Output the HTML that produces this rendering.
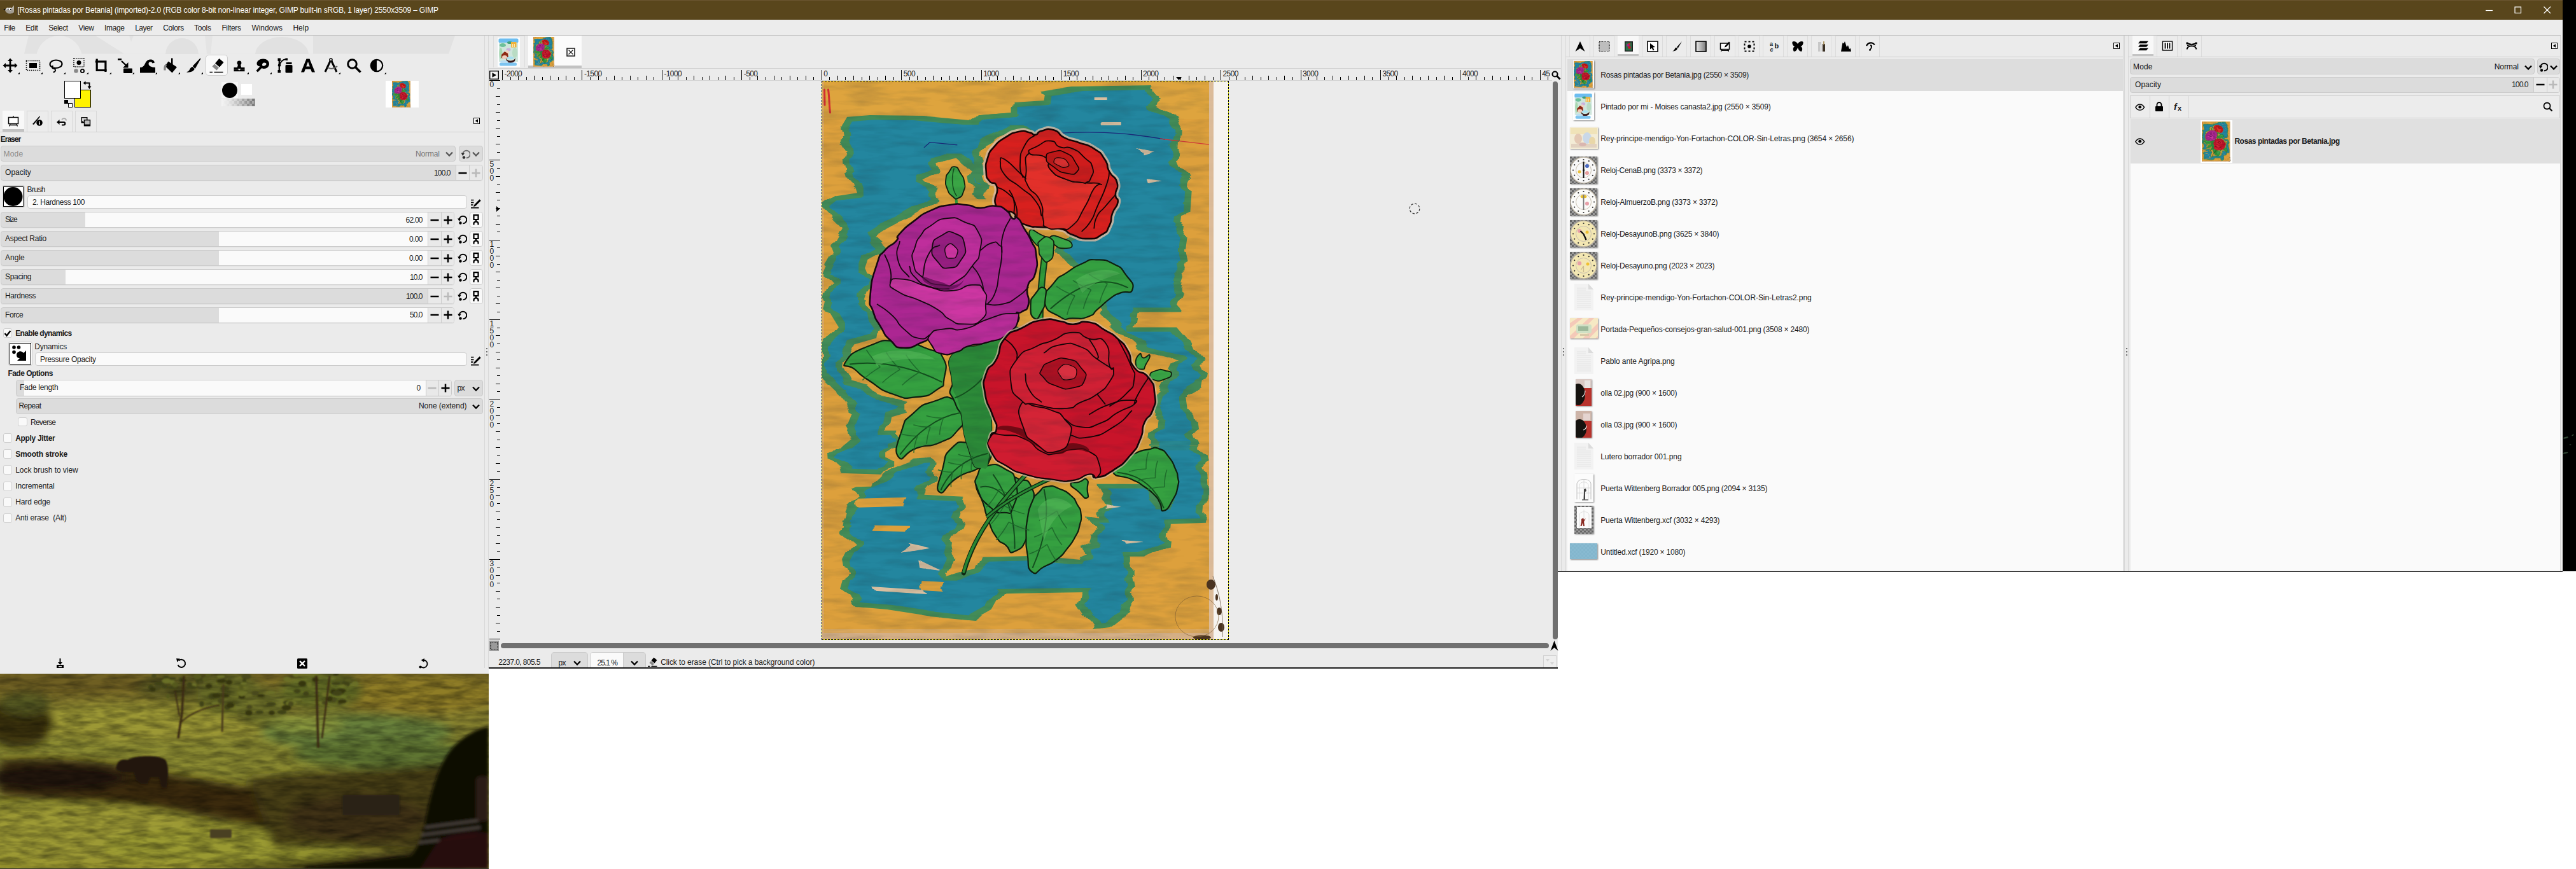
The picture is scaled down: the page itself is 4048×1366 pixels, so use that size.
<!DOCTYPE html><html><head><meta charset="utf-8"><title>GIMP</title><style>html,body{margin:0;padding:0;background:#fff}body{width:4048px;height:1366px;position:relative;overflow:hidden;font-family:"Liberation Sans", sans-serif;font-size:12px}svg{display:block;overflow:hidden}</style></head><body><svg width="0" height="0" style="position:absolute"><defs><filter id="pjag" x="-5%" y="-5%" width="110%" height="110%" color-interpolation-filters="sRGB"><feTurbulence type="fractalNoise" baseFrequency="0.004 0.055" numOctaves="1" seed="5" result="n0"/><feColorMatrix in="n0" type="matrix" values="3.2 0 0 0 -1.1  0 0 0 0 0.5  0 0 0 0 0.5  0 0 0 0 1" result="n1"/><feComponentTransfer in="n1" result="n"><feFuncR type="discrete" tableValues="0 0.15 0.3 0.42 0.5 0.58 0.7 0.85 1"/></feComponentTransfer><feDisplacementMap in="SourceGraphic" in2="n" scale="13" xChannelSelector="R" yChannelSelector="G"/></filter><filter id="perode" x="-5%" y="-5%" width="110%" height="110%" color-interpolation-filters="sRGB"><feMorphology operator="erode" radius="10 7" result="e"/><feTurbulence type="fractalNoise" baseFrequency="0.004 0.055" numOctaves="1" seed="5" result="n0"/><feColorMatrix in="n0" type="matrix" values="3.2 0 0 0 -1.1  0 0 0 0 0.5  0 0 0 0 0.5  0 0 0 0 1" result="n1"/><feComponentTransfer in="n1" result="n"><feFuncR type="discrete" tableValues="0 0.15 0.3 0.42 0.5 0.58 0.7 0.85 1"/></feComponentTransfer><feDisplacementMap in="e" in2="n" scale="13" xChannelSelector="R" yChannelSelector="G"/></filter><filter id="ptex" x="0" y="0" width="100%" height="100%"><feTurbulence type="fractalNoise" baseFrequency="0.018 0.085" numOctaves="3" seed="11" result="n"/><feColorMatrix in="n" type="matrix" values="0 0 0 0 0  0 0 0 0 0  0 0 0 0 0  1.5 0 0 0 -0.6" result="a"/><feComposite in="SourceGraphic" in2="a" operator="in"/></filter><symbol id="rosas" viewBox="1291 127 639 878" preserveAspectRatio="none"><rect x="1291" y="127" width="639" height="878" fill="#dda03c"/><rect x="1291" y="127" width="639" height="60" fill="#e0a640" opacity=".6"/><rect x="1291" y="994" width="620" height="11" fill="#d3b08e" opacity=".9"/><rect x="1291" y="988" width="620" height="6" fill="#d6b491" opacity=".4"/><rect x="1291" y="127" width="4" height="878" fill="#d8b08a" opacity=".45"/><g fill="#438c58" filter="url(#pjag)"><polygon points="1328,184 1366,181 1452,182 1527,189 1537,181 1587,177 1600,200 1566,217 1542,230 1537,244 1553,286 1546,313 1532,313 1525,270 1501,248 1473,256 1477,272 1456,282 1472,296 1468,320 1432,341 1394,358 1373,372 1397,393 1366,410 1373,400 1366,421 1373,438 1363,469 1368,497 1380,514 1377,531 1342,541 1332,562 1330,576 1339,597 1366,604 1384,621 1418,631 1418,648 1394,655 1390,676 1411,676 1411,700 1398,704 1398,732 1387,745 1326,743 1308,727 1307,711 1318,700 1335,686 1325,666 1335,642 1321,621 1292,593 1292,538 1311,514 1294,486 1304,445 1294,434 1301,417 1311,400 1306,386 1321,358 1304,341 1296,320 1311,308 1344,303 1337,282 1332,265 1330,241 1321,224 1318,201"/><polygon points="1344,768 1380,753 1401,734 1437,720 1469,718 1466,757 1451,777 1512,780 1516,807 1508,828 1494,857 1498,878 1491,905 1530,893 1537,875 1620,873 1702,880 1702,930 1576,932 1562,957 1530,975 1458,968 1387,957 1341,953 1326,928 1334,900 1330,878 1341,857 1319,836 1326,804 1348,782"/><polygon points="1600,882 1621,905 1671,900 1696,886 1689,875 1704,871 1700,857 1718,853 1721,843 1711,811 1732,814 1725,800 1736,793 1721,766 1722,760 1808,760 1818,778 1830,792 1836,793 1826,736 1812,700 1886,700 1896,740 1898,771 1894,821 1836,823 1832,860 1800,874 1775,874 1775,903 1778,921 1778,950 1768,968 1746,985 1721,988 1696,950 1700,930 1671,925 1621,925 1600,914"/><polygon points="1587,177 1587,161 1633,158 1635,144 1690,136 1811,134 1818,165 1842,180 1854,199 1852,248 1866,282 1862,341 1855,393 1864,435 1849,479 1856,490 1790,490 1786,514 1855,514 1873,535 1897,586 1893,607 1869,621 1876,673 1886,700 1808,700 1815,642 1824,614 1848,566 1793,552 1766,528 1728,493 1728,470 1700,440 1662,396 1690,350 1700,300 1690,250 1650,228 1610,216 1592,203 1566,217 1563,208 1537,205 1527,189 1537,181"/></g><g fill="#23869f" filter="url(#perode)"><polygon points="1328,184 1366,181 1452,182 1527,189 1537,181 1587,177 1600,200 1566,217 1542,230 1537,244 1553,286 1546,313 1532,313 1525,270 1501,248 1473,256 1477,272 1456,282 1472,296 1468,320 1432,341 1394,358 1373,372 1397,393 1366,410 1373,400 1366,421 1373,438 1363,469 1368,497 1380,514 1377,531 1342,541 1332,562 1330,576 1339,597 1366,604 1384,621 1418,631 1418,648 1394,655 1390,676 1411,676 1411,700 1398,704 1398,732 1387,745 1326,743 1308,727 1307,711 1318,700 1335,686 1325,666 1335,642 1321,621 1292,593 1292,538 1311,514 1294,486 1304,445 1294,434 1301,417 1311,400 1306,386 1321,358 1304,341 1296,320 1311,308 1344,303 1337,282 1332,265 1330,241 1321,224 1318,201"/><polygon points="1344,768 1380,753 1401,734 1437,720 1469,718 1466,757 1451,777 1512,780 1516,807 1508,828 1494,857 1498,878 1491,905 1530,893 1537,875 1620,873 1702,880 1702,930 1576,932 1562,957 1530,975 1458,968 1387,957 1341,953 1326,928 1334,900 1330,878 1341,857 1319,836 1326,804 1348,782"/><polygon points="1600,882 1621,905 1671,900 1696,886 1689,875 1704,871 1700,857 1718,853 1721,843 1711,811 1732,814 1725,800 1736,793 1721,766 1722,760 1808,760 1818,778 1830,792 1836,793 1826,736 1812,700 1886,700 1896,740 1898,771 1894,821 1836,823 1832,860 1800,874 1775,874 1775,903 1778,921 1778,950 1768,968 1746,985 1721,988 1696,950 1700,930 1671,925 1621,925 1600,914"/><polygon points="1587,177 1587,161 1633,158 1635,144 1690,136 1811,134 1818,165 1842,180 1854,199 1852,248 1866,282 1862,341 1855,393 1864,435 1849,479 1856,490 1790,490 1786,514 1855,514 1873,535 1897,586 1893,607 1869,621 1876,673 1886,700 1808,700 1815,642 1824,614 1848,566 1793,552 1766,528 1728,493 1728,470 1700,440 1662,396 1690,350 1700,300 1690,250 1650,228 1610,216 1592,203 1566,217 1563,208 1537,205 1527,189 1537,181"/></g><g filter="url(#pjag)"><polygon points="1348,783 1425,781 1420,795 1350,797" fill="#dda03c"/><polygon points="1300,746 1382,748 1376,764 1300,766" fill="#dda03c"/><polygon points="1369,825 1425,826 1423,835 1371,834" fill="#dda03c"/><polygon points="1448,912 1482,914 1480,929 1450,927" fill="#dda03c"/><polygon points="1423,853 1460,861 1423,868" fill="#d9bfa0"/><polygon points="1448,880 1482,896 1450,892" fill="#d9bfa0"/><polygon points="1376,921 1451,926 1451,933 1380,928" fill="#d9bfa0"/><polygon points="1735,792 1760,796 1736,799" fill="#d9bfa0"/><polygon points="1767,848 1795,851 1768,854" fill="#d9bfa0"/><polygon points="1790,233 1812,238 1792,244" fill="#d9bfa0"/><polygon points="1806,281 1828,284 1808,288" fill="#d9bfa0"/><polygon points="1712,153 1732,153 1732,157 1712,157" fill="#d9bfa0"/><polygon points="1730,192 1762,192 1762,197 1730,197" fill="#d9bfa0"/></g><path d="M1451.6,232 L1461,223.6 L1504,227.7" fill="none" stroke="#1b2a7a" stroke-width="1.3"/><path d="M1668,209 C1740,205 1790,212 1830,219" fill="none" stroke="#1b2a7a" stroke-width="1.3"/><path d="M1822,218 L1899,227" fill="none" stroke="#d03838" stroke-width="1.3"/><path d="M1295.5,141 L1296,165 M1301.5,141 C1303,150 1303,165 1304.5,177" fill="none" stroke="#d43030" stroke-width="3" stroke-linecap="round"/><path d="M1646,372 C1638,420 1632,470 1634,520" fill="none" stroke="#143c18" stroke-width="11"/><path d="M1646,372 C1638,420 1632,470 1634,520" fill="none" stroke="#2f9a3a" stroke-width="7"/><path d="M1502,310 L1503,322" stroke="#2f9a3a" stroke-width="4"/><path d="M1641.0,474.0C1638.0,456.7 1643.3,460.3 1655.0,445.0C1666.7,429.7 1661.0,438.3 1676.0,428.0C1691.0,417.7 1684.7,420.7 1700.0,414.0C1715.3,407.3 1705.3,407.7 1722.0,408.0C1738.7,408.3 1734.7,407.3 1750.0,415.0C1765.3,422.7 1758.3,418.0 1768.0,431.0C1777.7,444.0 1781.7,444.3 1779.0,454.0C1776.3,463.7 1771.3,455.3 1760.0,460.0C1748.7,464.7 1756.7,459.7 1745.0,468.0C1733.3,476.3 1736.7,475.3 1725.0,485.0C1713.3,494.7 1723.3,492.0 1710.0,497.0C1696.7,502.0 1700.3,500.0 1685.0,500.0C1669.7,500.0 1678.7,505.7 1664.0,497.0C1649.3,488.3 1644.0,491.3 1641.0,474.0Z" fill="#35a040" stroke="#10200f" stroke-width="2.2"/><path d="M1329.0,568.0C1336.7,555.7 1338.3,553.7 1366.0,543.0C1393.7,532.3 1381.3,534.3 1412.0,536.0C1442.7,537.7 1435.0,539.7 1458.0,548.0C1481.0,556.3 1472.5,545.7 1481.0,561.0C1489.5,576.3 1486.4,577.0 1483.4,594.0C1480.4,611.0 1486.6,602.1 1472.0,612.0C1457.4,621.9 1462.7,621.3 1439.7,623.6C1416.7,625.9 1427.6,627.5 1403.0,619.0C1378.4,610.5 1386.0,611.0 1366.0,598.0C1346.0,585.0 1355.3,590.0 1343.0,580.0C1330.7,570.0 1321.3,580.3 1329.0,568.0Z" fill="#35a040" stroke="#10200f" stroke-width="2.2"/><path d="M1412.0,718.0C1404.3,708.8 1409.0,699.5 1416.7,676.5C1424.4,653.5 1418.2,664.3 1435.0,649.0C1451.8,633.7 1445.5,637.5 1467.0,630.5C1488.5,623.5 1484.1,620.3 1499.6,628.0C1515.1,635.7 1511.9,637.3 1513.4,653.5C1514.9,669.7 1516.3,662.7 1504.0,676.5C1491.7,690.3 1497.9,685.8 1476.5,695.0C1455.1,704.2 1461.2,696.3 1439.7,704.0C1418.2,711.7 1419.7,727.2 1412.0,718.0Z" fill="#35a040" stroke="#10200f" stroke-width="2.2"/><path d="M1476.5,773.0C1468.8,768.3 1474.8,759.0 1481.0,736.0C1487.2,713.0 1481.1,717.7 1495.0,704.0C1508.9,690.3 1504.3,695.0 1522.6,695.0C1540.9,695.0 1539.3,694.8 1550.0,704.0C1560.7,713.2 1559.5,711.9 1554.8,722.6C1550.1,733.3 1552.9,726.9 1536.0,736.0C1519.1,745.1 1523.8,737.7 1504.0,750.0C1484.2,762.3 1484.2,777.7 1476.5,773.0Z" fill="#35a040" stroke="#10200f" stroke-width="2.2"/><path d="M1533.0,761.0C1531.7,747.3 1534.0,755.3 1540.0,748.0C1546.0,740.7 1542.7,742.3 1551.0,739.0C1559.3,735.7 1554.3,735.7 1565.0,738.0C1575.7,740.3 1571.3,741.3 1583.0,746.0C1594.7,750.7 1587.7,746.0 1600.0,752.0C1612.3,758.0 1612.7,748.0 1620.0,764.0C1627.3,780.0 1623.7,774.7 1622.0,800.0C1620.3,825.3 1624.3,818.0 1615.0,840.0C1605.7,862.0 1605.7,860.7 1594.0,866.0C1582.3,871.3 1589.7,863.7 1580.0,856.0C1570.3,848.3 1574.3,856.7 1565.0,843.0C1555.7,829.3 1559.0,833.0 1552.0,815.0C1545.0,797.0 1550.3,807.0 1544.0,789.0C1537.7,771.0 1534.3,774.7 1533.0,761.0Z" fill="#35a040" stroke="#10200f" stroke-width="2.2"/><path d="M1621.0,898.0C1612.3,891.3 1617.0,888.3 1614.0,870.0C1611.0,851.7 1612.0,861.3 1612.0,843.0C1612.0,824.7 1611.0,833.0 1614.0,815.0C1617.0,797.0 1615.0,803.0 1621.0,789.0C1627.0,775.0 1623.7,781.3 1632.0,773.0C1640.3,764.7 1635.0,765.7 1646.0,764.0C1657.0,762.3 1653.0,763.3 1665.0,768.0C1677.0,772.7 1673.0,770.0 1682.0,778.0C1691.0,786.0 1686.7,782.3 1692.0,792.0C1697.3,801.7 1696.7,796.0 1698.0,807.0C1699.3,818.0 1699.0,813.0 1696.0,825.0C1693.0,837.0 1695.7,830.7 1689.0,843.0C1682.3,855.3 1685.3,850.3 1676.0,862.0C1666.7,873.7 1673.0,868.7 1661.0,878.0C1649.0,887.3 1653.3,883.3 1640.0,890.0C1626.7,896.7 1629.7,904.7 1621.0,898.0Z" fill="#35a040" stroke="#10200f" stroke-width="2.2"/><path d="M1748.0,741.0C1743.7,730.7 1752.7,732.0 1765.0,722.0C1777.3,712.0 1772.3,716.3 1785.0,711.0C1797.7,705.7 1791.0,708.0 1803.0,706.0C1815.0,704.0 1810.0,701.0 1821.0,705.0C1832.0,709.0 1827.7,707.7 1836.0,718.0C1844.3,728.3 1841.3,725.3 1846.0,736.0C1850.7,746.7 1848.7,740.7 1850.0,750.0C1851.3,759.3 1852.7,752.3 1850.0,764.0C1847.3,775.7 1849.3,772.3 1842.0,785.0C1834.7,797.7 1834.7,800.3 1828.0,802.0C1821.3,803.7 1826.7,798.0 1822.0,790.0C1817.3,782.0 1822.3,786.7 1814.0,778.0C1805.7,769.3 1809.0,772.3 1797.0,764.0C1785.0,755.7 1794.3,760.7 1778.0,753.0C1761.7,745.3 1752.3,751.3 1748.0,741.0Z" fill="#35a040" stroke="#10200f" stroke-width="2.2"/><path d="M1682.0,760.0C1682.3,755.0 1686.7,759.3 1695.0,757.0C1703.3,754.7 1702.7,749.3 1707.0,753.0C1711.3,756.7 1708.0,758.3 1708.0,768.0C1708.0,777.7 1711.7,780.7 1707.0,782.0C1702.3,783.3 1702.3,779.3 1694.0,772.0C1685.7,764.7 1681.7,765.0 1682.0,760.0Z" fill="#35a040" stroke="#10200f" stroke-width="2.2"/><path d="M1500.0,552.0C1516.3,532.0 1516.7,552.3 1545.0,540.0C1573.3,527.7 1566.7,518.3 1585.0,515.0C1603.3,511.7 1603.3,515.0 1600.0,530.0C1596.7,545.0 1589.0,536.7 1575.0,560.0C1561.0,583.3 1564.3,553.3 1558.0,600.0C1551.7,646.7 1562.0,655.0 1556.0,700.0C1550.0,745.0 1552.0,735.0 1540.0,735.0C1528.0,735.0 1530.7,731.7 1520.0,700.0C1509.3,668.3 1516.0,673.3 1508.0,640.0C1500.0,606.7 1498.7,629.3 1496.0,600.0C1493.3,570.7 1483.7,572.0 1500.0,552.0Z" fill="#35a040" stroke="#10200f" stroke-width="2.2"/><path d="M1619.0,480.0C1619.3,467.3 1619.0,471.3 1626.0,462.0C1633.0,452.7 1634.7,449.3 1640.0,452.0C1645.3,454.7 1643.3,457.3 1642.0,470.0C1640.7,482.7 1641.7,480.0 1636.0,490.0C1630.3,500.0 1630.7,503.3 1625.0,500.0C1619.3,496.7 1618.7,492.7 1619.0,480.0Z" fill="#35a040" stroke="#10200f" stroke-width="2.2"/><path d="M1495.0,607.5C1501.1,593.7 1502.7,595.2 1518.0,589.0C1533.3,582.8 1530.3,581.3 1541.0,589.0C1551.7,596.7 1548.5,592.0 1550.0,612.0C1551.5,632.0 1551.7,629.0 1545.6,649.0C1539.5,669.0 1542.5,670.5 1531.8,672.0C1521.1,673.5 1524.1,667.3 1513.4,653.5C1502.7,639.7 1505.7,645.8 1499.6,630.5C1493.5,615.2 1488.9,621.3 1495.0,607.5Z" fill="#35a040" stroke="#10200f" stroke-width="2.2"/><path d="M1536.0,745.6C1540.7,733.3 1536.0,735.0 1550.0,731.8C1564.0,728.6 1562.7,726.9 1578.0,736.0C1593.3,745.1 1591.5,739.0 1596.0,759.0C1600.5,779.0 1597.6,780.7 1591.6,796.0C1585.6,811.3 1590.2,805.0 1578.0,805.0C1565.8,805.0 1569.0,808.1 1555.0,796.0C1541.0,783.9 1542.3,785.4 1536.0,768.6C1529.7,751.8 1531.3,757.9 1536.0,745.6Z" fill="#35a040" stroke="#10200f" stroke-width="2.2"/><path d="M1500.0,552.0C1516.3,532.0 1516.7,552.3 1545.0,540.0C1573.3,527.7 1566.7,518.3 1585.0,515.0C1603.3,511.7 1603.3,515.0 1600.0,530.0C1596.7,545.0 1589.0,536.7 1575.0,560.0C1561.0,583.3 1564.3,553.3 1558.0,600.0C1551.7,646.7 1562.0,655.0 1556.0,700.0C1550.0,745.0 1552.0,735.0 1540.0,735.0C1528.0,735.0 1530.7,731.7 1520.0,700.0C1509.3,668.3 1516.0,673.3 1508.0,640.0C1500.0,606.7 1498.7,629.3 1496.0,600.0C1493.3,570.7 1483.7,572.0 1500.0,552.0Z" fill="#2c8a38" stroke="none"/><path d="M1650,485 C1690,450 1730,430 1772,452" fill="none" stroke="#14501e" stroke-width="2"/><path d="M1335,572 C1390,565 1440,580 1480,600" fill="none" stroke="#14501e" stroke-width="2"/><path d="M1414,714 C1440,680 1470,655 1510,648" fill="none" stroke="#14501e" stroke-width="2"/><path d="M1478,770 C1490,742 1515,720 1552,712" fill="none" stroke="#14501e" stroke-width="2"/><path d="M1500,625 C1515,620 1535,605 1545,592" fill="none" stroke="#14501e" stroke-width="2"/><path d="M1540,765 C1560,760 1580,775 1590,798" fill="none" stroke="#14501e" stroke-width="2"/><path d="M1560,745 C1585,780 1595,820 1594,862" fill="none" stroke="#14501e" stroke-width="2"/><path d="M1622,892 C1640,850 1650,810 1640,768" fill="none" stroke="#14501e" stroke-width="2"/><path d="M1755,742 C1790,745 1815,765 1828,798" fill="none" stroke="#14501e" stroke-width="2"/><path d="M1739.5,445.5 Q1730.6,461.6 1727.3,475.5" fill="none" stroke="#1d6a2a" stroke-width="1.600" opacity=".85"/><path d="M1739.5,445.5 Q1722.3,439.2 1710.8,430.8" fill="none" stroke="#1d6a2a" stroke-width="1.600" opacity=".85"/><path d="M1713.9,455.0 Q1705.0,471.0 1701.8,484.9" fill="none" stroke="#1d6a2a" stroke-width="1.600" opacity=".85"/><path d="M1713.9,455.0 Q1696.8,448.7 1685.2,440.3" fill="none" stroke="#1d6a2a" stroke-width="1.600" opacity=".85"/><path d="M1688.4,464.5 Q1679.5,480.5 1676.2,494.4" fill="none" stroke="#1d6a2a" stroke-width="1.600" opacity=".85"/><path d="M1688.4,464.5 Q1671.2,458.2 1659.6,449.7" fill="none" stroke="#1d6a2a" stroke-width="1.600" opacity=".85"/><path d="M1445.2,584.2 Q1428.3,594.1 1417.4,604.9" fill="none" stroke="#1d6a2a" stroke-width="1.600" opacity=".85"/><path d="M1445.2,584.2 Q1431.3,570.3 1423.4,557.2" fill="none" stroke="#1d6a2a" stroke-width="1.600" opacity=".85"/><path d="M1414.2,580.3 Q1397.3,590.3 1386.4,601.0" fill="none" stroke="#1d6a2a" stroke-width="1.600" opacity=".85"/><path d="M1414.2,580.3 Q1400.3,566.4 1392.3,553.3" fill="none" stroke="#1d6a2a" stroke-width="1.600" opacity=".85"/><path d="M1383.1,576.4 Q1366.2,586.4 1355.3,597.1" fill="none" stroke="#1d6a2a" stroke-width="1.600" opacity=".85"/><path d="M1383.1,576.4 Q1369.2,562.5 1361.3,549.4" fill="none" stroke="#1d6a2a" stroke-width="1.600" opacity=".85"/><path d="M1482.0,656.7 Q1476.6,671.5 1476.2,682.9" fill="none" stroke="#1d6a2a" stroke-width="1.600" opacity=".85"/><path d="M1482.0,656.7 Q1466.2,656.5 1455.4,653.0" fill="none" stroke="#1d6a2a" stroke-width="1.600" opacity=".85"/><path d="M1461.7,670.7 Q1456.4,685.6 1455.9,697.0" fill="none" stroke="#1d6a2a" stroke-width="1.600" opacity=".85"/><path d="M1461.7,670.7 Q1446.0,670.6 1435.1,667.1" fill="none" stroke="#1d6a2a" stroke-width="1.600" opacity=".85"/><path d="M1441.5,684.8 Q1436.1,699.6 1435.7,711.0" fill="none" stroke="#1d6a2a" stroke-width="1.600" opacity=".85"/><path d="M1441.5,684.8 Q1425.7,684.7 1414.9,681.1" fill="none" stroke="#1d6a2a" stroke-width="1.600" opacity=".85"/><path d="M1528.5,717.2 Q1524.9,730.6 1526.1,740.4" fill="none" stroke="#1d6a2a" stroke-width="1.600" opacity=".85"/><path d="M1528.5,717.2 Q1514.6,717.2 1505.5,713.5" fill="none" stroke="#1d6a2a" stroke-width="1.600" opacity=".85"/><path d="M1512.6,729.4 Q1509.0,742.9 1510.2,752.6" fill="none" stroke="#1d6a2a" stroke-width="1.600" opacity=".85"/><path d="M1512.6,729.4 Q1498.7,729.4 1489.5,725.7" fill="none" stroke="#1d6a2a" stroke-width="1.600" opacity=".85"/><path d="M1496.7,741.6 Q1493.1,755.1 1494.3,764.9" fill="none" stroke="#1d6a2a" stroke-width="1.600" opacity=".85"/><path d="M1496.7,741.6 Q1482.8,741.6 1473.6,737.9" fill="none" stroke="#1d6a2a" stroke-width="1.600" opacity=".85"/><path d="M1569.7,768.4 Q1586.6,777.7 1601.9,781.3" fill="none" stroke="#1d6a2a" stroke-width="1.600" opacity=".85"/><path d="M1569.7,768.4 Q1560.5,785.4 1549.6,796.6" fill="none" stroke="#1d6a2a" stroke-width="1.600" opacity=".85"/><path d="M1577.3,794.1 Q1594.2,803.4 1609.4,807.0" fill="none" stroke="#1d6a2a" stroke-width="1.600" opacity=".85"/><path d="M1577.3,794.1 Q1568.1,811.1 1557.2,822.4" fill="none" stroke="#1d6a2a" stroke-width="1.600" opacity=".85"/><path d="M1584.8,819.8 Q1601.7,829.2 1617.0,832.7" fill="none" stroke="#1d6a2a" stroke-width="1.600" opacity=".85"/><path d="M1584.8,819.8 Q1575.6,836.8 1564.7,848.1" fill="none" stroke="#1d6a2a" stroke-width="1.600" opacity=".85"/><path d="M1660.1,802.3 Q1667.2,818.8 1675.9,829.6" fill="none" stroke="#1d6a2a" stroke-width="1.600" opacity=".85"/><path d="M1660.1,802.3 Q1645.4,812.6 1632.3,817.1" fill="none" stroke="#1d6a2a" stroke-width="1.600" opacity=".85"/><path d="M1652.6,828.6 Q1659.6,845.2 1668.3,856.0" fill="none" stroke="#1d6a2a" stroke-width="1.600" opacity=".85"/><path d="M1652.6,828.6 Q1637.8,838.9 1624.7,843.4" fill="none" stroke="#1d6a2a" stroke-width="1.600" opacity=".85"/><path d="M1645.0,855.0 Q1652.0,871.5 1660.7,882.3" fill="none" stroke="#1d6a2a" stroke-width="1.600" opacity=".85"/><path d="M1645.0,855.0 Q1630.2,865.3 1617.1,869.8" fill="none" stroke="#1d6a2a" stroke-width="1.600" opacity=".85"/><path d="M1829.1,764.7 Q1813.6,764.8 1802.3,769.0" fill="none" stroke="#1d6a2a" stroke-width="1.600" opacity=".85"/><path d="M1829.1,764.7 Q1828.8,749.2 1832.8,737.8" fill="none" stroke="#1d6a2a" stroke-width="1.600" opacity=".85"/><path d="M1814.7,750.6 Q1799.1,750.7 1787.9,754.9" fill="none" stroke="#1d6a2a" stroke-width="1.600" opacity=".85"/><path d="M1814.7,750.6 Q1814.3,735.1 1818.3,723.7" fill="none" stroke="#1d6a2a" stroke-width="1.600" opacity=".85"/><path d="M1800.2,736.5 Q1784.7,736.6 1773.4,740.9" fill="none" stroke="#1d6a2a" stroke-width="1.600" opacity=".85"/><path d="M1800.2,736.5 Q1799.9,721.0 1803.9,709.6" fill="none" stroke="#1d6a2a" stroke-width="1.600" opacity=".85"/><path d="M1690,440 C1710,425 1740,418 1760,430 C1740,435 1715,445 1700,460 Z" fill="#55b85a" opacity=".6"/><path d="M1370,560 C1400,545 1445,548 1470,565 C1445,562 1405,562 1378,575 Z" fill="#55b85a" opacity=".6"/><path d="M1630,800 C1640,780 1665,775 1685,795 C1670,800 1650,815 1640,850 Z" fill="#55b85a" opacity=".6"/><path d="M1612,745 C1570,790 1530,840 1514,900" fill="none" stroke="#0f2a12" stroke-width="7" stroke-linecap="round"/><path d="M1612,745 C1570,790 1530,840 1514,898" fill="none" stroke="#2a8a34" stroke-width="4" stroke-linecap="round"/><path d="M1650,752 C1610,770 1575,790 1550,812" fill="none" stroke="#0f2a12" stroke-width="6"/><path d="M1650,752 C1610,770 1575,790 1550,812" fill="none" stroke="#2a8a34" stroke-width="3"/><path d="M1500.0,262.0C1506.0,262.7 1504.0,264.0 1509.0,272.0C1514.0,280.0 1513.3,276.7 1515.0,286.0C1516.7,295.3 1517.0,291.7 1514.0,300.0C1511.0,308.3 1512.0,308.3 1506.0,311.0C1500.0,313.7 1502.0,313.0 1496.0,308.0C1490.0,303.0 1491.3,304.7 1488.0,296.0C1484.7,287.3 1485.0,290.7 1486.0,282.0C1487.0,273.3 1486.3,276.7 1491.0,270.0C1495.7,263.3 1494.0,261.3 1500.0,262.0Z" fill="#3aa545" stroke="#10200f" stroke-width="1.8"/><path d="M1784.0,572.0C1782.7,564.0 1786.0,559.3 1790.0,556.0C1794.0,552.7 1790.7,561.3 1796.0,562.0C1801.3,562.7 1804.7,554.7 1806.0,558.0C1807.3,561.3 1804.0,564.7 1800.0,572.0C1796.0,579.3 1799.3,580.0 1794.0,580.0C1788.7,580.0 1785.3,580.0 1784.0,572.0Z" fill="#3aa545" stroke="#10200f" stroke-width="1.8"/><path d="M1806.0,590.0C1806.7,585.0 1808.0,584.7 1816.0,582.0C1824.0,579.3 1822.0,580.0 1830.0,582.0C1838.0,584.0 1840.7,583.3 1840.0,588.0C1839.3,592.7 1836.7,593.0 1828.0,596.0C1819.3,599.0 1821.3,599.0 1814.0,597.0C1806.7,595.0 1805.3,595.0 1806.0,590.0Z" fill="#3aa545" stroke="#10200f" stroke-width="1.8"/><path d="M1618.0,362.0C1621.3,358.0 1625.3,363.3 1634.0,368.0C1642.7,372.7 1642.7,370.0 1644.0,376.0C1645.3,382.0 1644.7,384.7 1638.0,386.0C1631.3,387.3 1630.7,388.0 1624.0,380.0C1617.3,372.0 1614.7,366.0 1618.0,362.0Z" fill="#3aa545" stroke="#10200f" stroke-width="1.8"/><path d="M1650.0,372.0C1654.0,368.7 1656.7,370.0 1668.0,374.0C1679.3,378.0 1682.7,378.7 1684.0,384.0C1685.3,389.3 1681.3,390.0 1672.0,390.0C1662.7,390.0 1663.3,390.0 1656.0,384.0C1648.7,378.0 1646.0,375.3 1650.0,372.0Z" fill="#3aa545" stroke="#10200f" stroke-width="1.8"/><path d="M1634.0,378.0C1640.0,372.7 1643.0,369.3 1650.0,374.0C1657.0,378.7 1655.7,380.0 1655.0,392.0C1654.3,404.0 1654.3,406.0 1648.0,410.0C1641.7,414.0 1641.3,410.7 1636.0,404.0C1630.7,397.3 1632.7,398.7 1632.0,390.0C1631.3,381.3 1628.0,383.3 1634.0,378.0Z" fill="#3aa545" stroke="#10200f" stroke-width="1.8"/><path d="M1499,264 C1494,280 1496,298 1503,308" fill="none" stroke="#14501e" stroke-width="1.5"/><path d="M1549.3,269.7C1548.5,257.6 1547.7,260.9 1551.7,248.0C1555.8,235.1 1552.5,241.5 1561.4,231.1C1570.3,220.6 1565.4,224.6 1578.3,216.6C1591.2,208.5 1587.2,209.7 1600.0,206.9C1612.9,204.1 1608.1,206.5 1617.0,208.1C1625.8,209.7 1620.2,212.5 1626.6,211.7C1633.1,210.9 1626.6,208.1 1636.3,205.7C1645.9,203.3 1643.5,200.9 1655.6,204.5C1667.7,208.1 1659.6,210.1 1672.5,216.6C1685.4,223.0 1679.0,218.2 1694.3,223.8C1709.5,229.5 1704.7,224.6 1718.4,233.5C1732.1,242.3 1727.3,238.3 1735.3,250.4C1743.4,262.5 1736.1,257.6 1742.6,269.7C1749.0,281.8 1751.4,274.5 1754.6,286.6C1757.9,298.7 1751.8,295.5 1752.2,305.9C1752.6,316.4 1757.5,308.4 1755.8,318.0C1754.2,327.7 1751.8,322.9 1747.4,334.9C1743.0,347.0 1748.2,343.0 1742.6,354.3C1736.9,365.5 1741.8,361.9 1730.5,368.7C1719.2,375.6 1724.0,374.8 1708.7,374.8C1693.4,374.8 1699.1,374.0 1684.6,368.7C1670.1,363.5 1682.2,363.1 1665.3,359.1C1648.4,355.1 1650.8,358.3 1633.9,356.7C1617.0,355.1 1626.6,358.3 1614.5,354.3C1602.5,350.2 1604.9,351.0 1597.6,344.6C1590.4,338.1 1599.2,339.8 1592.8,334.9C1586.4,330.1 1588.0,334.9 1578.3,330.1C1568.6,325.3 1567.8,332.5 1563.8,320.4C1559.8,308.4 1569.5,305.9 1566.2,293.9C1563.0,281.8 1559.8,292.3 1554.2,284.2C1548.5,276.2 1550.1,281.8 1549.3,269.7Z" fill="none" stroke="#d9bca4" stroke-width="9" opacity=".85"/><path d="M1549.3,269.7C1548.5,257.6 1547.7,260.9 1551.7,248.0C1555.8,235.1 1552.5,241.5 1561.4,231.1C1570.3,220.6 1565.4,224.6 1578.3,216.6C1591.2,208.5 1587.2,209.7 1600.0,206.9C1612.9,204.1 1608.1,206.5 1617.0,208.1C1625.8,209.7 1620.2,212.5 1626.6,211.7C1633.1,210.9 1626.6,208.1 1636.3,205.7C1645.9,203.3 1643.5,200.9 1655.6,204.5C1667.7,208.1 1659.6,210.1 1672.5,216.6C1685.4,223.0 1679.0,218.2 1694.3,223.8C1709.5,229.5 1704.7,224.6 1718.4,233.5C1732.1,242.3 1727.3,238.3 1735.3,250.4C1743.4,262.5 1736.1,257.6 1742.6,269.7C1749.0,281.8 1751.4,274.5 1754.6,286.6C1757.9,298.7 1751.8,295.5 1752.2,305.9C1752.6,316.4 1757.5,308.4 1755.8,318.0C1754.2,327.7 1751.8,322.9 1747.4,334.9C1743.0,347.0 1748.2,343.0 1742.6,354.3C1736.9,365.5 1741.8,361.9 1730.5,368.7C1719.2,375.6 1724.0,374.8 1708.7,374.8C1693.4,374.8 1699.1,374.0 1684.6,368.7C1670.1,363.5 1682.2,363.1 1665.3,359.1C1648.4,355.1 1650.8,358.3 1633.9,356.7C1617.0,355.1 1626.6,358.3 1614.5,354.3C1602.5,350.2 1604.9,351.0 1597.6,344.6C1590.4,338.1 1599.2,339.8 1592.8,334.9C1586.4,330.1 1588.0,334.9 1578.3,330.1C1568.6,325.3 1567.8,332.5 1563.8,320.4C1559.8,308.4 1569.5,305.9 1566.2,293.9C1563.0,281.8 1559.8,292.3 1554.2,284.2C1548.5,276.2 1550.1,281.8 1549.3,269.7Z" fill="#d8201e" stroke="#160404" stroke-width="2.600"/><path d="M1617.0,240.7C1627.4,233.5 1632.3,239.1 1643.5,248.0C1654.8,256.8 1640.3,256.0 1650.8,267.3C1661.2,278.6 1658.8,275.3 1674.9,281.8C1691.0,288.2 1681.4,284.2 1699.1,286.6C1716.8,289.0 1721.6,285.8 1728.1,289.0C1734.5,292.3 1726.5,284.2 1718.4,296.3C1710.4,308.4 1715.2,305.9 1703.9,325.3C1692.6,344.6 1697.5,343.0 1684.6,354.3C1671.7,365.5 1679.0,358.3 1665.3,359.1C1651.6,359.9 1652.4,361.5 1643.5,356.7C1634.7,351.8 1641.9,358.3 1638.7,344.6C1635.5,330.9 1641.9,333.3 1633.9,315.6C1625.8,297.9 1621.8,306.7 1614.5,291.4C1607.3,276.2 1611.3,286.6 1612.1,269.7C1612.9,252.8 1606.5,248.0 1617.0,240.7Z" fill="#e2302a" stroke="#160404" stroke-width="1.800"/><path d="M1617.0,240.7C1612.9,234.3 1620.2,235.1 1631.4,228.6C1642.7,222.2 1639.5,220.6 1650.8,221.4C1662.0,222.2 1654.0,227.0 1665.3,231.1C1676.5,235.1 1671.7,227.8 1684.6,233.5C1697.5,239.1 1693.4,238.3 1703.9,248.0C1714.4,257.6 1712.8,252.0 1716.0,262.5C1719.2,272.9 1716.8,271.3 1713.6,279.4C1710.4,287.4 1711.2,284.2 1706.3,286.6C1701.5,289.0 1709.5,288.2 1699.1,286.6C1688.6,285.0 1691.0,288.2 1674.9,281.8C1658.8,275.3 1661.2,278.6 1650.8,267.3C1640.3,256.0 1654.8,256.8 1643.5,248.0C1632.3,239.1 1621.0,247.2 1617.0,240.7Z" fill="#cf1c1c" stroke="#160404" stroke-width="1.800"/><path d="M1643.5,248.0C1643.5,239.9 1645.1,240.7 1655.6,238.3C1666.1,235.9 1663.7,235.1 1674.9,240.7C1686.2,246.4 1683.8,245.6 1689.4,255.2C1695.1,264.9 1696.7,264.1 1691.8,269.7C1687.0,275.3 1687.0,274.5 1674.9,272.1C1662.9,269.7 1666.1,270.5 1655.6,262.5C1645.1,254.4 1643.5,256.0 1643.5,248.0Z" fill="#c01818" stroke="#160404" stroke-width="1.600"/><path d="M1655.6,252.8C1656.4,248.8 1658.0,247.2 1665.3,248.0C1672.5,248.8 1674.1,250.4 1677.3,255.2C1680.6,260.0 1679.8,260.9 1674.9,262.5C1670.1,264.1 1669.3,263.3 1662.9,260.0C1656.4,256.8 1654.8,256.8 1655.6,252.8Z" fill="#d83030" stroke="#160404" stroke-width="1.200"/><path d="M1571.1,252.8C1573.5,260.0 1567.8,260.9 1578.3,274.5C1588.8,288.2 1586.4,280.2 1602.5,293.9C1618.6,307.6 1615.3,300.3 1626.6,315.6C1637.9,330.9 1633.1,331.7 1636.3,339.8" fill="none" stroke="#160404" stroke-width="1.800"/><path d="M1571.1,252.8C1573.5,252.0 1567.8,243.9 1578.3,250.4C1588.8,256.8 1591.2,261.7 1602.5,272.1C1613.7,282.6 1608.9,278.6 1612.1,281.8" fill="none" stroke="#160404" stroke-width="1.800"/><path d="M1626.6,211.7C1621.0,217.4 1617.8,213.3 1609.7,228.6C1601.7,243.9 1603.3,240.7 1602.5,257.6C1601.7,274.5 1605.7,272.1 1607.3,279.4" fill="none" stroke="#160404" stroke-width="1.800"/><path d="M1742.6,269.7C1741.0,277.0 1744.2,272.9 1737.7,291.4C1731.3,310.0 1731.3,306.7 1723.2,325.3C1715.2,343.8 1721.6,334.1 1713.6,347.0C1705.5,359.9 1703.9,358.3 1699.1,363.9" fill="none" stroke="#160404" stroke-width="1.800"/><path d="M1752.2,305.9C1746.6,312.4 1745.0,314.0 1735.3,325.3C1725.7,336.5 1728.9,328.5 1723.2,339.8C1717.6,351.0 1720.0,352.6 1718.4,359.1" fill="none" stroke="#160404" stroke-width="1.800"/><path d="M1566.2,293.9C1571.9,297.1 1573.5,294.7 1583.1,303.5C1592.8,312.4 1590.4,306.7 1595.2,320.4C1600.0,334.1 1596.8,336.5 1597.6,344.6" fill="none" stroke="#160404" stroke-width="1.800"/><path d="M1585.6,298.7C1588.0,304.3 1590.4,303.5 1592.8,315.6C1595.2,327.7 1592.8,328.5 1592.8,334.9" fill="none" stroke="#160404" stroke-width="1.800"/><path d="M1367.5,462.6C1369.5,437.6 1370.5,437.6 1377.9,414.7C1385.4,391.8 1379.9,405.7 1389.9,393.8C1399.9,381.8 1399.9,387.8 1407.9,378.8C1415.8,369.8 1403.9,377.8 1413.8,366.8C1423.8,355.9 1421.8,357.9 1437.8,345.9C1453.7,333.9 1443.8,338.9 1461.7,330.9C1479.7,323.0 1472.7,325.0 1491.6,322.0C1510.6,319.0 1502.6,320.5 1518.5,322.0C1534.5,323.5 1524.5,326.0 1539.5,326.5C1554.4,327.0 1549.5,322.0 1563.4,323.5C1577.4,325.0 1572.4,324.5 1581.4,330.9C1590.3,337.4 1584.3,338.9 1590.3,342.9C1596.3,346.9 1593.3,337.9 1599.3,342.9C1605.3,347.9 1601.3,345.9 1608.3,357.9C1615.3,369.8 1613.8,364.8 1620.2,378.8C1626.7,392.8 1625.7,382.8 1627.7,399.7C1629.7,416.7 1630.7,412.7 1626.2,429.7C1621.7,446.6 1617.8,434.6 1614.3,450.6C1610.8,466.5 1618.7,464.6 1615.8,477.5C1612.8,490.5 1611.8,484.5 1605.3,489.5C1598.8,494.5 1598.3,487.5 1596.3,492.5C1594.3,497.5 1604.3,493.5 1599.3,504.4C1594.3,515.4 1597.3,514.4 1581.4,525.4C1565.4,536.3 1571.4,531.4 1551.4,537.3C1531.5,543.3 1537.5,538.3 1521.5,543.3C1505.6,548.3 1517.5,548.3 1503.6,552.3C1489.6,556.3 1492.6,558.3 1479.7,555.3C1466.7,552.3 1470.7,551.3 1464.7,543.3C1458.7,535.3 1466.7,533.4 1461.7,531.4C1456.7,529.4 1463.7,532.4 1449.7,537.3C1435.8,542.3 1436.8,547.3 1419.8,546.3C1402.9,545.3 1410.9,545.3 1398.9,534.3C1386.9,523.4 1392.9,528.4 1383.9,513.4C1375.0,498.5 1377.4,506.4 1372.0,489.5C1366.5,472.5 1365.5,487.5 1367.5,462.6Z" fill="#ac2692" stroke="#160810" stroke-width="2.600"/><path d="M1398.9,444.6C1400.9,437.6 1399.9,436.6 1419.8,438.6C1439.8,440.6 1433.8,444.6 1458.7,450.6C1483.6,456.6 1471.7,457.6 1494.6,456.6C1517.5,455.6 1510.6,447.6 1527.5,447.6C1544.5,447.6 1538.5,446.6 1545.5,456.6C1552.4,466.5 1549.5,462.6 1548.5,477.5C1547.5,492.5 1553.4,491.0 1542.5,501.4C1531.5,511.9 1532.5,508.9 1515.5,508.9C1498.6,508.9 1505.6,508.9 1491.6,501.4C1477.7,494.0 1489.6,496.5 1473.7,486.5C1457.7,476.5 1463.7,480.5 1443.8,471.5C1423.8,462.6 1428.8,468.5 1413.8,459.6C1398.9,450.6 1396.9,451.6 1398.9,444.6Z" fill="#cd36a2" stroke="#160810" stroke-width="1.800"/><path d="M1461.7,525.4C1468.7,516.4 1467.7,519.4 1485.6,516.4C1503.6,513.4 1493.6,521.4 1515.5,516.4C1537.5,511.4 1527.5,509.4 1551.4,501.4C1575.4,493.5 1571.4,492.5 1587.3,492.5C1603.3,492.5 1601.3,490.5 1599.3,501.4C1597.3,512.4 1597.3,513.4 1581.4,525.4C1565.4,537.3 1571.4,531.4 1551.4,537.3C1531.5,543.3 1537.5,538.3 1521.5,543.3C1505.6,548.3 1517.5,548.3 1503.6,552.3C1489.6,556.3 1492.6,558.3 1479.7,555.3C1466.7,552.3 1470.7,553.3 1464.7,543.3C1458.7,533.4 1454.7,534.3 1461.7,525.4Z" fill="#b82c98" stroke="#160810" stroke-width="1.800"/><path d="M1446.7,369.8C1454.7,358.9 1447.7,363.8 1461.7,354.9C1475.7,345.9 1470.7,344.9 1488.6,342.9C1506.6,340.9 1499.6,341.9 1515.5,348.9C1531.5,355.9 1528.5,348.9 1536.5,363.8C1544.5,378.8 1542.5,375.8 1539.5,393.8C1536.5,411.7 1539.5,401.7 1527.5,417.7C1515.5,433.6 1519.5,431.6 1503.6,441.6C1487.6,451.6 1497.6,449.6 1479.7,447.6C1461.7,445.6 1464.7,447.6 1449.7,435.6C1434.8,423.7 1438.8,427.7 1434.8,411.7C1430.8,395.8 1433.8,401.7 1437.8,387.8C1441.8,373.8 1438.8,380.8 1446.7,369.8Z" fill="#bf2e9c" stroke="#160810" stroke-width="1.800"/><path d="M1464.7,387.8C1466.7,373.8 1467.7,376.8 1479.7,369.8C1491.6,362.8 1488.6,361.8 1500.6,366.8C1512.6,371.8 1512.6,370.8 1515.5,384.8C1518.5,398.7 1517.5,396.7 1509.6,408.7C1501.6,420.7 1503.6,419.7 1491.6,420.7C1479.7,421.7 1482.6,422.7 1473.7,411.7C1464.7,400.7 1462.7,401.7 1464.7,387.8Z" fill="#961e80" stroke="#160810" stroke-width="1.800"/><path d="M1488.6,384.8C1493.6,380.8 1495.6,382.8 1500.6,387.8C1505.6,392.8 1505.6,393.8 1503.6,399.7C1501.6,405.7 1500.6,405.7 1494.6,405.7C1488.6,405.7 1487.6,406.7 1485.6,399.7C1483.6,392.8 1483.6,388.8 1488.6,384.8Z" fill="#cc34a0" stroke="#160810" stroke-width="1.400"/><path d="M1377.9,477.5C1385.9,483.5 1387.9,482.5 1401.9,495.5C1415.8,508.4 1405.9,504.4 1419.8,516.4C1433.8,528.4 1429.8,528.4 1443.8,531.4C1457.7,534.3 1455.7,527.4 1461.7,525.4" fill="none" stroke="#160810" stroke-width="1.800"/><path d="M1428.8,417.7C1431.8,423.7 1426.8,424.7 1437.8,435.6C1448.7,446.6 1443.8,444.6 1461.7,450.6C1479.7,456.6 1481.6,452.6 1491.6,453.6" fill="none" stroke="#160810" stroke-width="1.800"/><path d="M1539.5,393.8C1545.5,389.8 1547.5,384.8 1557.4,381.8C1567.4,378.8 1563.9,379.8 1569.4,384.8C1574.9,389.8 1573.9,381.8 1573.9,396.7C1573.9,411.7 1572.9,408.7 1569.4,429.7C1565.9,450.6 1569.4,443.6 1563.4,459.6C1557.4,475.5 1555.4,471.5 1551.4,477.5" fill="none" stroke="#160810" stroke-width="1.800"/><path d="M1587.3,342.9C1583.4,351.9 1579.9,351.9 1575.4,369.8C1570.9,387.8 1574.4,387.8 1573.9,396.7" fill="none" stroke="#160810" stroke-width="1.800"/><path d="M1413.8,378.8C1412.8,388.8 1405.9,389.8 1410.9,408.7C1415.8,427.7 1422.8,426.7 1428.8,435.6" fill="none" stroke="#160810" stroke-width="1.800"/><path d="M1389.9,399.7C1392.9,407.7 1395.9,408.7 1398.9,423.7C1401.9,438.6 1398.9,437.6 1398.9,444.6" fill="none" stroke="#160810" stroke-width="1.800"/><path d="M1449.7,435.6C1452.7,423.7 1449.7,416.7 1458.7,399.7C1467.7,382.8 1470.7,389.8 1476.7,384.8" fill="none" stroke="#160810" stroke-width="1.800"/><path d="M1527.5,417.7C1531.5,423.7 1533.5,422.7 1539.5,435.6C1545.5,448.6 1543.5,449.6 1545.5,456.6" fill="none" stroke="#160810" stroke-width="1.800"/><path d="M1615.8,450.6C1610.3,455.6 1612.8,456.6 1599.3,465.5C1585.8,474.5 1592.3,473.5 1575.4,477.5C1558.4,481.5 1557.4,477.5 1548.5,477.5" fill="none" stroke="#160810" stroke-width="1.800"/><path d="M1449.7,435.6C1447.7,438.6 1451.7,444.6 1467.7,450.6C1483.6,456.6 1481.6,458.6 1497.6,453.6C1513.6,448.6 1514.6,437.6 1515.5,435.6C1516.5,433.6 1514.6,445.6 1500.6,447.6C1486.6,449.6 1490.6,445.6 1473.7,441.6C1456.7,437.6 1451.7,432.6 1449.7,435.6Z" fill="#5a0e4e" opacity=".7"/><path d="M1547.7,618.9C1544.5,597.4 1543.4,604.9 1549.3,586.7C1555.2,568.4 1555.8,582.4 1565.4,564.1C1575.1,545.9 1565.4,548.0 1578.3,531.9C1591.2,515.8 1584.8,525.4 1604.1,515.8C1623.5,506.1 1615.9,506.7 1636.3,502.9C1656.8,499.1 1649.2,502.4 1665.4,504.5C1681.5,506.7 1669.6,508.8 1684.7,509.3C1699.7,509.9 1693.3,502.9 1710.5,506.1C1727.7,509.3 1721.2,510.4 1736.3,519.0C1751.3,527.6 1743.8,521.2 1755.6,531.9C1767.4,542.6 1763.1,536.2 1771.7,551.2C1780.3,566.3 1770.6,563.0 1781.4,577.0C1792.1,591.0 1793.2,579.2 1803.9,593.1C1814.7,607.1 1811.4,601.7 1813.6,618.9C1815.7,636.1 1815.7,629.6 1810.4,644.7C1805.0,659.7 1803.9,649.0 1797.5,664.0C1791.0,679.1 1798.6,672.6 1791.0,689.8C1783.5,707.0 1788.9,699.5 1774.9,715.6C1761.0,731.7 1766.3,726.9 1749.1,738.1C1732.0,749.4 1736.3,747.3 1723.4,749.4C1710.5,751.6 1723.4,743.0 1710.5,744.6C1697.6,746.2 1704.0,751.6 1684.7,754.3C1665.4,756.9 1677.2,755.9 1652.5,752.6C1627.8,749.4 1634.2,751.6 1610.6,744.6C1586.9,737.6 1598.8,742.4 1581.6,731.7C1564.4,721.0 1567.6,727.4 1559.0,712.4C1550.4,697.3 1553.6,699.5 1555.8,686.6C1557.9,673.7 1564.4,685.5 1565.4,673.7C1566.5,661.9 1564.9,669.4 1559.0,651.1C1553.1,632.9 1550.9,640.4 1547.7,618.9Z" fill="none" stroke="#d9bca4" stroke-width="7" opacity=".7"/><path d="M1547.7,618.9C1544.5,597.4 1543.4,604.9 1549.3,586.7C1555.2,568.4 1555.8,582.4 1565.4,564.1C1575.1,545.9 1565.4,548.0 1578.3,531.9C1591.2,515.8 1584.8,525.4 1604.1,515.8C1623.5,506.1 1615.9,506.7 1636.3,502.9C1656.8,499.1 1649.2,502.4 1665.4,504.5C1681.5,506.7 1669.6,508.8 1684.7,509.3C1699.7,509.9 1693.3,502.9 1710.5,506.1C1727.7,509.3 1721.2,510.4 1736.3,519.0C1751.3,527.6 1743.8,521.2 1755.6,531.9C1767.4,542.6 1763.1,536.2 1771.7,551.2C1780.3,566.3 1770.6,563.0 1781.4,577.0C1792.1,591.0 1793.2,579.2 1803.9,593.1C1814.7,607.1 1811.4,601.7 1813.6,618.9C1815.7,636.1 1815.7,629.6 1810.4,644.7C1805.0,659.7 1803.9,649.0 1797.5,664.0C1791.0,679.1 1798.6,672.6 1791.0,689.8C1783.5,707.0 1788.9,699.5 1774.9,715.6C1761.0,731.7 1766.3,726.9 1749.1,738.1C1732.0,749.4 1736.3,747.3 1723.4,749.4C1710.5,751.6 1723.4,743.0 1710.5,744.6C1697.6,746.2 1704.0,751.6 1684.7,754.3C1665.4,756.9 1677.2,755.9 1652.5,752.6C1627.8,749.4 1634.2,751.6 1610.6,744.6C1586.9,737.6 1598.8,742.4 1581.6,731.7C1564.4,721.0 1567.6,727.4 1559.0,712.4C1550.4,697.3 1553.6,699.5 1555.8,686.6C1557.9,673.7 1564.4,685.5 1565.4,673.7C1566.5,661.9 1564.9,669.4 1559.0,651.1C1553.1,632.9 1550.9,640.4 1547.7,618.9Z" fill="#c8142a" stroke="#140406" stroke-width="2.600"/><path d="M1555.8,686.6C1562.2,676.9 1560.1,682.3 1578.3,683.4C1596.6,684.4 1591.2,681.2 1610.6,689.8C1629.9,698.4 1620.2,701.6 1636.3,709.1C1652.5,716.7 1642.8,713.4 1658.9,712.4C1675.0,711.3 1667.5,707.0 1684.7,705.9C1701.9,704.8 1696.5,701.6 1710.5,709.1C1724.4,716.7 1722.3,715.1 1726.6,728.5C1730.9,741.9 1728.7,744.1 1723.4,749.4C1718.0,754.8 1723.4,743.0 1710.5,744.6C1697.6,746.2 1704.0,751.6 1684.7,754.3C1665.4,756.9 1677.2,755.9 1652.5,752.6C1627.8,749.4 1634.2,751.6 1610.6,744.6C1586.9,737.6 1598.8,742.4 1581.6,731.7C1564.4,721.0 1567.6,727.4 1559.0,712.4C1550.4,697.3 1549.3,696.3 1555.8,686.6Z" fill="#cf1c30" stroke="#140406" stroke-width="1.800"/><path d="M1565.4,673.7C1565.4,676.9 1574.0,671.5 1594.5,680.1C1614.9,688.7 1605.2,688.7 1626.7,699.5C1648.2,710.2 1639.6,710.2 1658.9,712.4C1678.2,714.5 1667.5,707.0 1684.7,705.9C1701.9,704.8 1708.3,712.4 1710.5,709.1C1712.6,705.9 1708.3,699.5 1691.1,696.3C1673.9,693.0 1680.4,702.7 1658.9,699.5C1637.4,696.3 1648.2,696.3 1626.7,686.6C1605.2,676.9 1614.9,674.8 1594.5,670.5C1574.0,666.2 1565.4,670.5 1565.4,673.7Z" fill="#5a060e" opacity=".75"/><path d="M1604.1,635.0C1597.7,645.8 1599.8,650.1 1607.3,670.5C1614.9,690.9 1609.5,683.4 1626.7,696.3C1643.9,709.1 1640.6,713.4 1658.9,709.1C1677.2,704.8 1677.2,700.5 1681.5,683.4C1685.8,666.2 1681.5,670.5 1671.8,657.6C1662.1,644.7 1667.5,651.1 1652.5,644.7C1637.4,638.2 1642.8,641.5 1626.7,638.2C1610.6,635.0 1610.6,624.3 1604.1,635.0Z" fill="#d42436" stroke="#140406" stroke-width="1.800"/><path d="M1597.7,564.1C1610.6,545.9 1608.4,554.5 1626.7,544.8C1644.9,535.1 1633.1,542.6 1652.5,535.1C1671.8,527.6 1665.4,523.3 1684.7,522.2C1704.0,521.2 1693.3,526.5 1710.5,531.9C1727.7,537.3 1725.5,524.4 1736.3,538.3C1747.0,552.3 1738.4,559.8 1742.7,573.8C1747.0,587.8 1749.1,571.6 1749.1,580.2C1749.1,588.8 1751.3,586.7 1742.7,599.6C1734.1,612.5 1738.4,608.2 1723.4,618.9C1708.3,629.6 1714.8,624.3 1697.6,631.8C1680.4,639.3 1695.4,640.4 1671.8,641.5C1648.2,642.5 1649.2,639.3 1626.7,635.0C1604.1,630.7 1617.0,640.4 1604.1,628.6C1591.2,616.8 1590.2,621.1 1588.0,599.6C1585.9,578.1 1584.8,582.4 1597.7,564.1Z" fill="#d02034" stroke="#140406" stroke-width="1.800"/><path d="M1636.3,580.2C1640.6,571.6 1638.5,572.7 1652.5,567.3C1666.4,562.0 1663.2,560.9 1678.2,564.1C1693.3,567.3 1689.0,566.3 1697.6,577.0C1706.2,587.8 1708.3,585.6 1704.0,596.3C1699.7,607.1 1699.7,606.0 1684.7,609.2C1669.6,612.5 1673.9,611.4 1658.9,606.0C1643.9,600.6 1647.1,601.7 1639.6,593.1C1632.1,584.5 1632.1,588.8 1636.3,580.2Z" fill="#b01022" stroke="#140406" stroke-width="1.600"/><path d="M1665.4,577.0C1670.7,571.6 1672.9,570.6 1681.5,573.8C1690.1,577.0 1692.2,579.2 1691.1,586.7C1690.1,594.2 1686.8,595.3 1678.2,596.3C1669.6,597.4 1669.6,596.3 1665.4,589.9C1661.1,583.5 1660.0,582.4 1665.4,577.0Z" fill="#d83040" stroke="#140406" stroke-width="1.200"/><path d="M1671.8,657.6C1680.4,661.9 1678.2,668.3 1697.6,670.5C1716.9,672.6 1710.5,671.5 1729.8,664.0C1749.1,656.5 1738.4,657.6 1755.6,647.9C1772.8,638.2 1774.9,641.5 1781.4,635.0C1787.8,628.6 1787.8,628.6 1774.9,628.6C1762.0,628.6 1764.2,627.5 1742.7,635.0C1721.2,642.5 1721.2,645.8 1710.5,651.1" fill="none" stroke="#140406" stroke-width="1.800"/><path d="M1681.5,683.4C1691.1,684.4 1687.9,690.9 1710.5,686.6C1733.0,682.3 1726.6,684.4 1749.1,670.5C1771.7,656.5 1768.5,653.3 1778.1,644.7" fill="none" stroke="#140406" stroke-width="1.800"/><path d="M1639.6,554.5C1648.2,550.2 1646.0,544.8 1665.4,541.6C1684.7,538.3 1678.2,537.3 1697.6,544.8C1716.9,552.3 1706.2,552.3 1723.4,564.1C1740.5,575.9 1740.5,574.9 1749.1,580.2" fill="none" stroke="#140406" stroke-width="1.800"/><path d="M1755.6,531.9C1762.0,544.8 1766.3,549.1 1774.9,570.6C1783.5,592.1 1783.5,580.2 1781.4,596.3C1779.2,612.5 1781.4,604.9 1768.5,618.9C1755.6,632.9 1751.3,631.8 1742.7,638.2" fill="none" stroke="#140406" stroke-width="1.800"/><path d="M1610.6,586.7C1612.7,595.3 1608.4,597.4 1617.0,612.5C1625.6,627.5 1629.9,625.4 1636.3,631.8" fill="none" stroke="#140406" stroke-width="1.800"/><path d="M1710.5,531.9C1714.8,539.4 1719.1,543.7 1723.4,554.5C1727.7,565.2 1723.4,560.9 1723.4,564.1" fill="none" stroke="#140406" stroke-width="1.800"/><path d="M1578.3,531.9C1583.7,537.3 1588.0,537.3 1594.5,548.0C1600.9,558.8 1596.6,558.8 1597.7,564.1" fill="none" stroke="#140406" stroke-width="1.800"/><path d="M1723.4,618.9C1727.7,624.3 1732.0,629.6 1736.3,635.0" fill="none" stroke="#140406" stroke-width="1.800"/><path d="M1803.9,593.1C1798.6,601.7 1795.3,604.9 1787.8,618.9C1780.3,632.9 1783.5,629.6 1781.4,635.0" fill="none" stroke="#140406" stroke-width="1.800"/><rect x="1291" y="127" width="616" height="878" fill="#10202a" filter="url(#ptex)" opacity=".22"/><rect x="1899" y="127" width="8" height="878" fill="#dcbfa8" opacity=".85"/><rect x="1906" y="127" width="24" height="878" fill="#f6f3ef"/><g fill="#4a3320"><ellipse cx="1902" cy="918" rx="7" ry="8"/><ellipse cx="1915" cy="960" rx="4" ry="6"/><ellipse cx="1918" cy="985" rx="5" ry="7"/><ellipse cx="1888" cy="1001" rx="14" ry="3.5"/><ellipse cx="1911" cy="938" rx="2" ry="5"/></g><path d="M1905,905 C1915,930 1922,960 1920,1000" fill="none" stroke="#6a5a48" stroke-width="1" opacity=".8"/><ellipse cx="1880" cy="968" rx="34" ry="32" fill="none" stroke="#7a5a30" stroke-width=".8" opacity=".8"/></symbol><symbol id="moises" viewBox="0 0 35 46" preserveAspectRatio="none"><defs><filter id="mb"><feGaussianBlur stdDeviation="0.700"/></filter></defs><rect width="35" height="46" fill="#fbfdfe"/><g filter="url(#mb)"><rect x="1.500" y="1.500" width="31" height="7" rx="2" fill="#6cbdf0"/><rect x="2" y="8" width="30" height="30" fill="#cfe6dc"/><ellipse cx="8" cy="12" rx="5" ry="3" fill="#6cc09a"/><ellipse cx="19" cy="8" rx="4" ry="2" fill="#3ea07a"/><rect x="21" y="7" width="8.500" height="8.500" fill="#eeb23a"/><rect x="22.500" y="10" width="1.500" height="5" fill="#fbe7b0"/><rect x="25.500" y="10" width="1.500" height="5" fill="#fbe7b0"/><ellipse cx="5" cy="25" rx="2.500" ry="9" fill="#a9d8b0"/><ellipse cx="27" cy="24" rx="4" ry="8" fill="#b9dcc4"/><ellipse cx="17" cy="19" rx="3.500" ry="2.500" fill="#c9b2dc"/><ellipse cx="15" cy="23.500" rx="3" ry="3.500" fill="#f1d2c2"/><path d="M6 27l5-5 5 3 1 6-5 3-6-2z" fill="#8e2a14"/><ellipse cx="11" cy="31" rx="4" ry="3" fill="#f0cdbc"/><path d="M13 32c2 6 12 6 15 0l-1 5c-4 4-10 4-13 0z" fill="#3a1a1c"/><ellipse cx="20" cy="32" rx="5.500" ry="2.200" fill="#a8e0f0"/><rect x="3" y="39.500" width="27" height="5" rx="2" fill="#7cc4f0"/><ellipse cx="10" cy="38" rx="6" ry="2" fill="#b9def2"/></g></symbol><pattern id="ck2" width="6" height="6" patternUnits="userSpaceOnUse"><rect width="6" height="6" fill="#9a9a9a"/><rect width="3" height="3" fill="#666"/><rect x="3" y="3" width="3" height="3" fill="#666"/></pattern><symbol id="doc" viewBox="0 0 34 44"><path d="M2 1h22l8 9v33H2z" fill="#f2f2f2"/><path d="M24 1v9h8z" fill="#dcdcdc"/><g stroke="#e4e4e4" stroke-width="1.200"><path d="M6 14h22M6 17h22M6 20h22M6 23h22M6 26h22M6 29h22M6 32h22M6 35h22M6 38h22"/><path d="M6 8h14M6 11h14"/></g></symbol></defs></svg><div style="position:absolute;left:0.0px;top:0.0px;width:4048.0px;height:1366.0px;background:#ffffff;"></div>
<div style="position:absolute;left:0.0px;top:31.0px;width:4027.0px;height:1019.0px;background:#ebebeb;"></div>
<div style="position:absolute;left:0.0px;top:1050.0px;width:768.0px;height:10.0px;background:#ebebeb;"></div>
<div style="position:absolute;left:2448.0px;top:898.0px;width:1600.0px;height:470.0px;background:#ffffff;"></div>
<div style="position:absolute;left:768.0px;top:1050.0px;width:1680.0px;height:316.0px;background:#ffffff;"></div>
<div style="position:absolute;left:4027.0px;top:0.0px;width:21.0px;height:898.0px;background:#000000;"></div>
<svg style="position:absolute;left:4027.0px;top:670.0px;" width="21" height="60" viewBox="0 0 21 60"><g fill="#3f5a44" opacity=".8"><ellipse cx="5" cy="18" rx="4" ry="1.200" transform="rotate(-15 5 18)"/><ellipse cx="4.500" cy="42" rx="4" ry="1" transform="rotate(-10 4.500 42)"/><ellipse cx="16" cy="14" rx="2" ry=".8" transform="rotate(-30 16 14)"/><ellipse cx="12" cy="29" rx="1.500" ry=".8"/></g></svg>
<div style="position:absolute;left:0.0px;top:0.0px;width:4027.0px;height:31.0px;background:#59461c;"></div>
<div style="position:absolute;left:0.0px;top:0.0px;width:4027.0px;height:1.0px;background:#6b5631;"></div>
<span style="position:absolute;top:8.0px;line-height:16px;font-size:12px;letter-spacing:-0.169px;color:#ffffff;white-space:pre;left:27.4px;">[Rosas pintadas por Betania] (imported)-2.0 (RGB color 8-bit non-linear integer, GIMP built-in sRGB, 1 layer) 2550x3509 – GIMP</span>
<svg style="position:absolute;left:4.0px;top:6.0px;" width="20" height="18" viewBox="0 0 20 18"><path d="M13.500 7.500L18 2.200 17.800 13.500 14.500 15z" fill="#b9b4aa"/><path d="M4 9.500C5 6.500 9 6 12 6.500s5 3 5 5.500-2.500 3.500-5.500 3.500S4.500 13.500 4 9.500z" fill="#a19b91"/><circle cx="8" cy="8" r="2" fill="#fff"/><circle cx="12" cy="8.200" r="2.200" fill="#fff"/><circle cx="8.600" cy="8.500" r="1" fill="#000"/><circle cx="12.800" cy="8.800" r="1.100" fill="#000"/><circle cx="3" cy="9" r="1.300" fill="#111"/><circle cx="17.300" cy="14.500" r=".8" fill="#3a2a14"/></svg>
<svg style="position:absolute;left:3906.0px;top:10.0px;" width="12" height="12" viewBox="0 0 12 12"><path d="M0 6.500h11" stroke="#fff" stroke-width="1.200"/></svg>
<svg style="position:absolute;left:3951.0px;top:10.0px;" width="12" height="12" viewBox="0 0 12 12"><rect x="1" y="1" width="9.500" height="9.500" fill="none" stroke="#fff" stroke-width="1.200"/></svg>
<svg style="position:absolute;left:3997.0px;top:10.0px;" width="12" height="12" viewBox="0 0 12 12"><path d="M0.500 0.500l10.500 10.500M11 0.500L0.500 11" stroke="#fff" stroke-width="1.200"/></svg>
<div style="position:absolute;left:0.0px;top:31.0px;width:4027.0px;height:24.0px;background:#ececec;"></div>
<div style="position:absolute;left:0.0px;top:55.0px;width:4027.0px;height:1.0px;background:#c0c0c0;"></div>
<span style="position:absolute;top:35.5px;line-height:16px;font-size:12px;letter-spacing:-0.411px;color:#1a1a1a;white-space:pre;left:6.2px;">File</span>
<span style="position:absolute;top:35.5px;line-height:16px;font-size:12px;letter-spacing:-0.359px;color:#1a1a1a;white-space:pre;left:40.2px;">Edit</span>
<span style="position:absolute;top:35.5px;line-height:16px;font-size:12px;letter-spacing:-0.510px;color:#1a1a1a;white-space:pre;left:76.3px;">Select</span>
<span style="position:absolute;top:35.5px;line-height:16px;font-size:12px;letter-spacing:-0.397px;color:#1a1a1a;white-space:pre;left:123.3px;">View</span>
<span style="position:absolute;top:35.5px;line-height:16px;font-size:12px;letter-spacing:-0.338px;color:#1a1a1a;white-space:pre;left:164.0px;">Image</span>
<span style="position:absolute;top:35.5px;line-height:16px;font-size:12px;letter-spacing:-0.529px;color:#1a1a1a;white-space:pre;left:212.2px;">Layer</span>
<span style="position:absolute;top:35.5px;line-height:16px;font-size:12px;letter-spacing:-0.335px;color:#1a1a1a;white-space:pre;left:256.2px;">Colors</span>
<span style="position:absolute;top:35.5px;line-height:16px;font-size:12px;letter-spacing:-0.303px;color:#1a1a1a;white-space:pre;left:305.1px;">Tools</span>
<span style="position:absolute;top:35.5px;line-height:16px;font-size:12px;letter-spacing:-0.361px;color:#1a1a1a;white-space:pre;left:348.4px;">Filters</span>
<span style="position:absolute;top:35.5px;line-height:16px;font-size:12px;letter-spacing:-0.030px;color:#1a1a1a;white-space:pre;left:395.4px;">Windows</span>
<span style="position:absolute;top:35.5px;line-height:16px;font-size:12px;letter-spacing:0.041px;color:#1a1a1a;white-space:pre;left:460.4px;">Help</span>
<svg style="position:absolute;left:0.0px;top:56.0px;" width="761" height="28.5" viewBox="0 0 761 28.500"><g><path d="M45 0H715L705 28.500H38z" fill="#e2e2e2"/><circle cx="93" cy="36" r="36" fill="#ebebeb"/><path d="M150 0L195 28.500H212L203 0z" fill="#ebebeb"/><path d="M210 0H492V28.500H198z" fill="#ebebeb"/><ellipse cx="286" cy="30" rx="26" ry="26" fill="#e1e1e1"/><ellipse cx="443" cy="30" rx="42" ry="28" fill="#e1e1e1"/><path d="M322 0h12l-3 28.500h-6z" fill="#e4e4e4"/></g></svg>
<svg style="position:absolute;left:4.0px;top:91.0px;" width="24" height="24" viewBox="0 0 24 24"><path d="M12 0.5l4 4.5h-2.6v5.6h5.6V8l4.5 4-4.5 4v-2.6h-5.6v5.6H16l-4 4.5-4-4.5h2.6v-5.6H5V16l-4.5-4L5 8v2.6h5.6V5H8z"/></svg>
<svg style="position:absolute;left:27.6px;top:113.3px;" width="3.6" height="3.6" viewBox="0 0 3.6 3.6"><path d="M3.600 0v3.600H0z"/></svg>
<svg style="position:absolute;left:40.0px;top:91.0px;" width="24" height="24" viewBox="0 0 24 24"><rect x="1.5" y="4.5" width="21" height="15" fill="none" stroke="#000" stroke-width="1.6" stroke-dasharray="1.6 1.6"/><rect x="6" y="8" width="12" height="8"/></svg>
<svg style="position:absolute;left:63.6px;top:113.3px;" width="3.6" height="3.6" viewBox="0 0 3.6 3.6"><path d="M3.600 0v3.600H0z"/></svg>
<svg style="position:absolute;left:76.0px;top:91.0px;" width="24" height="24" viewBox="0 0 24 24"><path d="M12 3.5c-5.5 0-9.5 2.8-9.5 6.3 0 2.5 2 4.300 4.800 5.200 M12 3.500c5.500 0 9.500 2.500 9.500 6 0 3.700-4.500 6.500-10 6.500-1.500 0-2.800-.2-4-.6" fill="none" stroke="#000" stroke-width="2.200"/><path d="M7.500 12.500c-2 1-2 4 .5 4.300 2.500.3 4 2 2.500 4.200-.6.900-1.800 1.500-3 1.500" fill="none" stroke="#000" stroke-width="2"/></svg>
<svg style="position:absolute;left:99.6px;top:113.3px;" width="3.6" height="3.6" viewBox="0 0 3.6 3.6"><path d="M3.600 0v3.600H0z"/></svg>
<svg style="position:absolute;left:112.0px;top:91.0px;" width="24" height="24" viewBox="0 0 24 24"><rect x="4" y="1" width="16" height="13" fill="none" stroke="#000" stroke-width="1.5" stroke-dasharray="1.500 1.500"/><circle cx="12" cy="7.500" r="3.500"/><circle cx="7.500" cy="20.500" r="3.300" fill="#888"/><circle cx="17.500" cy="20.500" r="2.600" fill="none" stroke="#000" stroke-width="1.800"/></svg>
<svg style="position:absolute;left:135.6px;top:113.3px;" width="3.6" height="3.6" viewBox="0 0 3.6 3.6"><path d="M3.600 0v3.600H0z"/></svg>
<svg style="position:absolute;left:148.0px;top:91.0px;" width="24" height="24" viewBox="0 0 24 24"><path d="M4.200 1.400V19.500H19.500" fill="none" stroke="#000" stroke-width="3.200"/><path d="M1.800 5.900H17.900V22" fill="none" stroke="#000" stroke-width="3.200"/></svg>
<svg style="position:absolute;left:171.6px;top:113.3px;" width="3.6" height="3.6" viewBox="0 0 3.6 3.6"><path d="M3.600 0v3.600H0z"/></svg>
<svg style="position:absolute;left:184.0px;top:91.0px;" width="24" height="24" viewBox="0 0 24 24"><rect x="1" y="1" width="6" height="2.600"/><path d="M7 5l9 8.500" stroke="#000" stroke-width="2.400"/><path d="M17.500 7v8.500H9z"/><rect x="10" y="16.500" width="14" height="7.500" rx="1"/></svg>
<svg style="position:absolute;left:207.6px;top:113.3px;" width="3.6" height="3.6" viewBox="0 0 3.6 3.6"><path d="M3.600 0v3.600H0z"/></svg>
<svg style="position:absolute;left:220.0px;top:91.0px;" width="24" height="24" viewBox="0 0 24 24"><path d="M0 23.500V15c4 0 6-2 8-6 2-4.500 5-6.500 8.500-6.500 3.500 0 6 2 6.500 5l-3.500 1c-.5-1.500-1.500-2.300-3-2.300-2 0-3 1.300-3 3 0 3 3.500 5.500 10.500 5.800v8.500z"/></svg>
<svg style="position:absolute;left:243.6px;top:113.3px;" width="3.6" height="3.6" viewBox="0 0 3.6 3.6"><path d="M3.600 0v3.600H0z"/></svg>
<svg style="position:absolute;left:256.0px;top:91.0px;" width="24" height="24" viewBox="0 0 24 24"><path d="M13 0.500h2.500v11H13z"/><path d="M8.500 5.500L22 14.500 14.500 23.500 3.500 13z"/><path d="M4.500 9.500C2 11 1 14 1.500 19.500h3.200c-.2-4 .3-6 1.300-7.500z" fill="#888"/></svg>
<svg style="position:absolute;left:279.6px;top:113.3px;" width="3.6" height="3.6" viewBox="0 0 3.6 3.6"><path d="M3.600 0v3.600H0z"/></svg>
<svg style="position:absolute;left:292.0px;top:91.0px;" width="24" height="24" viewBox="0 0 24 24"><path d="M23 1L11.500 13l3 3L23 1z" stroke="#000" stroke-width="1.200"/><path d="M10.500 14l3.300 3.300c-1.500 3.500-5 5.200-10.500 5.400-1 0-2.300-.2-2.300-.5 3.500-1 4.200-2.500 5.500-5 .8-1.500 2.200-2.600 4-3.200z"/></svg>
<svg style="position:absolute;left:315.6px;top:113.3px;" width="3.6" height="3.6" viewBox="0 0 3.6 3.6"><path d="M3.600 0v3.600H0z"/></svg>
<div style="position:absolute;left:322.5px;top:86.2px;width:35.2px;height:33.2px;background:#f9f9f9;border:1px solid #cdcdcd;border-radius:5px;box-sizing:border-box;"></div>
<svg style="position:absolute;left:328.0px;top:91.0px;" width="24" height="24" viewBox="0 0 24 24"><path d="M16.500 1l7 6-6.500 7.500-7-6z"/><path d="M9 9.500l7 6-3.500 4-7-6z" fill="#888"/><path d="M1.500 22.500h4.500M8.500 22.500h14" stroke="#000" stroke-width="1.600"/></svg>
<svg style="position:absolute;left:364.0px;top:91.0px;" width="24" height="24" viewBox="0 0 24 24"><circle cx="12" cy="8" r="3.400"/><path d="M10.300 9.500h3.400l1.600 6h-6.600z"/><path d="M3.500 15h17v3.200h-17z"/><path d="M3.500 18.200h17v3h-17z"/><path d="M9.300 17l2.700 2.800 2.700-2.800z" fill="#ebebeb"/></svg>
<svg style="position:absolute;left:387.6px;top:113.3px;" width="3.6" height="3.6" viewBox="0 0 3.6 3.6"><path d="M3.600 0v3.600H0z"/></svg>
<svg style="position:absolute;left:400.0px;top:91.0px;" width="24" height="24" viewBox="0 0 24 24"><path d="M13.500 1.500c5.500 0 9.500 3.500 9.500 8 0 4.500-4 7.500-8 7.500-1.500 0-2.500-.3-3.500-1L5 22.500 2.500 20l6-6.500c-3-.5-5-2-5-4.500 0-4 4.500-7.500 10-7.500zm1.500 6c-1.500 0-3 1.500-3 3.500 0 1 .8 1.800 2 1.800 2 0 4.500-1.500 4.500-3.300 0-1.200-1.500-2-3.500-2z" fill-rule="evenodd"/></svg>
<svg style="position:absolute;left:423.6px;top:113.3px;" width="3.6" height="3.6" viewBox="0 0 3.6 3.6"><path d="M3.600 0v3.600H0z"/></svg>
<svg style="position:absolute;left:436.0px;top:91.0px;" width="24" height="24" viewBox="0 0 24 24"><rect x="0.500" y="0.500" width="4.500" height="4.500"/><rect x="0.500" y="19" width="4.500" height="4.500"/><path d="M2.800 4v16" stroke="#000" stroke-width="2.200"/><path d="M3 11.500c2-6 6-9 10.500-9.500" fill="none" stroke="#000" stroke-width="2"/><circle cx="3" cy="11.500" r="2.300"/><rect x="12.500" y="0.500" width="3.500" height="3.500"/><rect x="13.500" y="7" width="9" height="3"/><rect x="12.500" y="11" width="11" height="12.500" rx="1.500"/></svg>
<svg style="position:absolute;left:472.0px;top:91.0px;" width="24" height="24" viewBox="0 0 24 24"><path d="M9.500 1.500h5l8.500 21h-5l-1.800-4.800H7.800L6 22.500H1zm2.500 4.500l-2.800 7.500h5.600z"/></svg>
<svg style="position:absolute;left:508.0px;top:91.0px;" width="24" height="24" viewBox="0 0 24 24"><circle cx="12" cy="3" r="2" fill="none" stroke="#000" stroke-width="1.600"/><path d="M11 5L3 22M13 5l8 17" stroke="#000" stroke-width="3"/><path d="M7 15c4 3 10 2.500 15-2" fill="none" stroke="#666" stroke-width="2"/></svg>
<svg style="position:absolute;left:531.6px;top:113.3px;" width="3.6" height="3.6" viewBox="0 0 3.6 3.6"><path d="M3.600 0v3.600H0z"/></svg>
<svg style="position:absolute;left:544.0px;top:91.0px;" width="24" height="24" viewBox="0 0 24 24"><circle cx="9.500" cy="9.500" r="6.800" fill="none" stroke="#000" stroke-width="3"/><path d="M14.500 14.500l8 8" stroke="#000" stroke-width="3.600"/></svg>
<svg style="position:absolute;left:580.0px;top:91.0px;" width="24" height="24" viewBox="0 0 24 24"><circle cx="12" cy="12" r="9.200" fill="none" stroke="#000" stroke-width="2.200"/><path d="M12 2.500a9.500 9.500 0 0 0 0 19z"/></svg>
<svg style="position:absolute;left:603.6px;top:113.3px;" width="3.6" height="3.6" viewBox="0 0 3.6 3.6"><path d="M3.600 0v3.600H0z"/></svg>
<div style="position:absolute;left:117.0px;top:141.0px;width:24.0px;height:26.0px;background:#fff200;border:1px solid #000;"></div>
<div style="position:absolute;left:101.0px;top:127.0px;width:24.0px;height:26.0px;background:#ffffff;border:1px solid #000;"></div>
<div style="position:absolute;left:101.0px;top:157.0px;width:6.0px;height:6.0px;background:#000;"></div>
<div style="position:absolute;left:106.5px;top:162.0px;width:5.0px;height:5.0px;background:#fff;border:1px solid #000;"></div>
<svg style="position:absolute;left:130.0px;top:127.0px;" width="14" height="14" viewBox="0 0 14 14"><path d="M3 3.500h7.500v7" fill="none" stroke="#000" stroke-width="1.800"/><path d="M4.500 0.500v6L0.500 3.500zM7.500 8.500h6l-3 4.500z"/></svg>
<div style="position:absolute;left:348.0px;top:129.0px;width:26.0px;height:25.0px;background:#f6f6f6;"></div>
<svg style="position:absolute;left:349.0px;top:130.0px;" width="25" height="25" viewBox="0 0 25 25"><circle cx="12" cy="12" r="12"/></svg>
<div style="position:absolute;left:379.0px;top:132.0px;width:17.0px;height:17.0px;background:#ffffff;"></div>
<svg style="position:absolute;left:348.0px;top:155.0px;" width="53" height="12" viewBox="0 0 53 12"><defs><pattern id="ck" width="8" height="8" patternUnits="userSpaceOnUse"><rect width="8" height="8" fill="#999"/><rect width="4" height="4" fill="#666"/><rect x="4" y="4" width="4" height="4" fill="#666"/></pattern><linearGradient id="gfade"><stop offset="0" stop-color="#f4f4f4"/><stop offset=".25" stop-color="#f4f4f4" stop-opacity=".85"/><stop offset="1" stop-color="#f4f4f4" stop-opacity="0.1"/></linearGradient></defs><rect width="53" height="12" fill="url(#ck)"/><rect width="53" height="12" fill="url(#gfade)"/></svg>
<div style="position:absolute;left:605.5px;top:127.0px;width:52.0px;height:42.0px;background:#ffffff;"></div>
<svg style="position:absolute;left:616px;top:127px" width="30" height="42"><use href="#rosas" width="30" height="42"/></svg>
<div style="position:absolute;left:4.3px;top:174.3px;width:33.4px;height:28.7px;background:#f8f8f8;"></div>
<div style="position:absolute;left:4.3px;top:203.0px;width:33.4px;height:4.0px;background:#c2c2c2;"></div>
<div style="position:absolute;left:42.3px;top:174.3px;width:33.4px;height:32.7px;background:#ececec;border:1px solid #d8d8d8;border-bottom:none;box-sizing:border-box;"></div>
<div style="position:absolute;left:80.3px;top:174.3px;width:33.4px;height:32.7px;background:#ececec;border:1px solid #d8d8d8;border-bottom:none;box-sizing:border-box;"></div>
<div style="position:absolute;left:118.3px;top:174.3px;width:33.4px;height:32.7px;background:#ececec;border:1px solid #d8d8d8;border-bottom:none;box-sizing:border-box;"></div>
<svg style="position:absolute;left:12.0px;top:181.0px;" width="18" height="18" viewBox="0 0 18 18"><rect x="1.500" y="3.500" width="15" height="10" fill="#fff" stroke="#000" stroke-width="1.500"/><path d="M9 1v2.500M4 14l-1.500 3.500M14 14l1.500 3.500M3 15.500h12" stroke="#000" stroke-width="1.300" fill="none"/></svg>
<svg style="position:absolute;left:50.0px;top:181.0px;" width="18" height="18" viewBox="0 0 18 18"><path d="M1 14L12 1.500l1 1L3 15z"/><circle cx="12" cy="12" r="4.800"/><path d="M12 9v1.200M12 11.200v3.600" stroke="#fff" stroke-width="1.600"/></svg>
<svg style="position:absolute;left:88.0px;top:181.0px;" width="18" height="18" viewBox="0 0 18 18"><path d="M9 7c3-3 7-2 7 1.500" fill="none" stroke="#aaa" stroke-width="1.800"/><path d="M2 11h10c3 0 3 4.500 0 4.500H9" fill="none" stroke="#000" stroke-width="2"/><path d="M5.500 7L1 11l4.500 4z"/></svg>
<svg style="position:absolute;left:127.0px;top:183.0px;" width="16" height="16" viewBox="0 0 16 16"><rect x="1.200" y="1.700" width="8.600" height="8" fill="#d8d8d8" stroke="#000" stroke-width="1.400"/><rect x="1.200" y="7.500" width="3" height="2.500"/><rect x="5.500" y="5.700" width="9" height="9" fill="#bdbdbd" stroke="#000" stroke-width="1.400"/><rect x="5.500" y="12.500" width="9" height="2.600"/></svg>
<svg style="position:absolute;left:743.5px;top:185.0px;" width="10" height="10" viewBox="0 0 10 10"><rect x=".5" y=".5" width="9" height="9" fill="#f6f6f6" stroke="#000" stroke-width="1"/><path d="M7 2.300v5.400L2.800 5z"/></svg>
<div style="position:absolute;left:0.0px;top:207.0px;width:761.0px;height:1.0px;background:#d0d0d0;"></div>
<div style="position:absolute;left:761.0px;top:56.0px;width:1.0px;height:994.0px;background:#d8d8d8;"></div>
<div style="position:absolute;left:767.0px;top:56.0px;width:1.0px;height:994.0px;background:#d8d8d8;"></div>
<svg style="position:absolute;left:763.0px;top:545.0px;" width="4" height="16" viewBox="0 0 4 16"><circle cx="2" cy="3" r="1.100" fill="#555"/><circle cx="2" cy="8" r="1.100" fill="#555"/><circle cx="2" cy="13" r="1.100" fill="#555"/></svg>
<span style="position:absolute;top:210.5px;line-height:16px;font-size:12px;letter-spacing:-0.973px;color:#1a1a1a;white-space:pre;font-weight:bold;left:0.7px;">Eraser</span>
<div style="position:absolute;left:0.6px;top:229.4px;width:715.8px;height:25.0px;background:#dcdcdc;border:1px solid #cbcbcb;border-radius:4px;box-sizing:border-box;"></div>
<span style="position:absolute;top:233.7px;line-height:16px;font-size:12px;letter-spacing:0.161px;color:#8a8a8a;white-space:pre;left:5.6px;">Mode</span>
<span style="position:absolute;top:233.7px;line-height:16px;font-size:12px;letter-spacing:-0.134px;color:#777;white-space:pre;left:653.0px;">Normal</span>
<svg style="position:absolute;left:699.5px;top:236.0px;" width="12" height="12" viewBox="0 0 12 12"><path d="M1 3.500l5 5 5-5" fill="none" stroke="#555" stroke-width="2.300"/></svg>
<div style="position:absolute;left:721.4px;top:229.4px;width:37.2px;height:25.0px;background:#dcdcdc;border:1px solid #cbcbcb;border-radius:4px;box-sizing:border-box;"></div>
<svg style="position:absolute;left:724.5px;top:235.0px;opacity:.8;" width="14" height="15" viewBox="0 0 14 15"><path d="M2.200 7.500A5.800 5.800 0 1 1 8 13.300" fill="none" stroke="#555" stroke-width="2"/><path d="M-0.300 5.300l5.400 0.400-3 4.300z"/><circle cx="4" cy="12.500" r="2.200"/></svg>
<svg style="position:absolute;left:742.0px;top:236.0px;" width="12" height="12" viewBox="0 0 12 12"><path d="M1 3.500l5 5 5-5" fill="none" stroke="#555" stroke-width="2.300"/></svg>
<div style="position:absolute;left:0.6px;top:259.2px;width:758.0px;height:25.2px;background:linear-gradient(90deg,#dcdcdc 759.4px,#fafafa 759.4px);border:1px solid #cbcbcb;border-radius:4px;box-sizing:border-box;box-shadow:0 1px 0 #e2e2e2;"></div>
<div style="position:absolute;left:716.0px;top:260.2px;width:41.6px;height:23.2px;background:#e9e9e9;border-radius:0 3px 3px 0;"></div>
<div style="position:absolute;left:716.0px;top:260.2px;width:1.0px;height:23.2px;background:#cbcbcb;"></div>
<div style="position:absolute;left:737.0px;top:260.2px;width:1.0px;height:23.2px;background:#cbcbcb;"></div>
<svg style="position:absolute;left:719.5px;top:264.8px;" width="14" height="14" viewBox="0 0 14 14"><path d="M0.500 7h13" stroke="#000" stroke-width="2.500"/></svg>
<svg style="position:absolute;left:740.8px;top:264.8px;" width="14" height="14" viewBox="0 0 14 14"><path d="M0.500 7h13M7 0.500v13" stroke="#b9b9b9" stroke-width="2.500"/></svg>
<span style="position:absolute;top:263.3px;line-height:16px;font-size:12px;letter-spacing:0.003px;color:#1a1a1a;white-space:pre;left:8.1px;">Opacity</span>
<span style="position:absolute;top:263.8px;line-height:16px;font-size:12px;letter-spacing:-0.907px;color:#1a1a1a;white-space:pre;left:682.1px;">100.0</span>
<div style="position:absolute;left:2.5px;top:290.5px;width:36.0px;height:36.0px;background:#f9f9f9;border:1px solid #cfcfcf;border-radius:3px;box-sizing:border-box;"></div>
<div style="position:absolute;left:4.5px;top:292.5px;width:32.0px;height:32.0px;background:#ffffff;border:1px solid #000;box-sizing:border-box;"></div>
<svg style="position:absolute;left:5.0px;top:293.0px;" width="31" height="31" viewBox="0 0 31 31"><circle cx="15.500" cy="16" r="15"/><path d="M27 28h4M29 26v4" stroke="#fff" stroke-width="1"/></svg>
<span style="position:absolute;top:289.5px;line-height:16px;font-size:12px;letter-spacing:-0.587px;color:#1a1a1a;white-space:pre;left:42.5px;">Brush</span>
<div style="position:absolute;left:42.5px;top:306.8px;width:691.5px;height:21.4px;background:#fafafa;border:1px solid #cbcbcb;border-radius:4px;box-sizing:border-box;"></div>
<span style="position:absolute;top:309.5px;line-height:16px;font-size:12px;letter-spacing:-0.397px;color:#1a1a1a;white-space:pre;left:51.0px;">2. Hardness 100</span>
<svg style="position:absolute;left:740.0px;top:313.0px;" width="16" height="15" viewBox="0 0 16 15"><path d="M0 1.500h4.500M0 5.300h4.500M0 9.100h3.500M0 13.600h12.500" stroke="#000" stroke-width="1.700"/><path d="M13.600 0.300l2.100 2.100-8.600 8.600-3 1 1-3z"/></svg>
<div style="position:absolute;left:0.6px;top:333.4px;width:713.4px;height:25.0px;background:linear-gradient(90deg,#dcdcdc 132.0px,#fafafa 132.0px);border:1px solid #cbcbcb;border-radius:4px;box-sizing:border-box;box-shadow:0 1px 0 #e2e2e2;"></div>
<div style="position:absolute;left:672.0px;top:334.4px;width:41.0px;height:23.0px;background:#e9e9e9;border-radius:0 3px 3px 0;"></div>
<div style="position:absolute;left:672.0px;top:334.4px;width:1.0px;height:23.0px;background:#cbcbcb;"></div>
<div style="position:absolute;left:693.0px;top:334.4px;width:1.0px;height:23.0px;background:#cbcbcb;"></div>
<svg style="position:absolute;left:675.5px;top:338.9px;" width="14" height="14" viewBox="0 0 14 14"><path d="M0.500 7h13" stroke="#000" stroke-width="2.500"/></svg>
<svg style="position:absolute;left:696.5px;top:338.9px;" width="14" height="14" viewBox="0 0 14 14"><path d="M0.500 7h13M7 0.500v13" stroke="#000" stroke-width="2.500"/></svg>
<span style="position:absolute;top:337.4px;line-height:16px;font-size:12px;letter-spacing:-1.248px;color:#1a1a1a;white-space:pre;left:8.1px;">Size</span>
<span style="position:absolute;top:337.9px;line-height:16px;font-size:12px;letter-spacing:-0.757px;color:#1a1a1a;white-space:pre;left:637.5px;">62.00</span>
<svg style="position:absolute;left:718.5px;top:338.4px;" width="15" height="15" viewBox="-0.500 0 15 15"><path d="M2.200 7.500A5.800 5.800 0 1 1 8 13.300" fill="none" stroke="#000" stroke-width="2"/><path d="M-0.300 5.300l5.400 0.400-3 4.300z"/><circle cx="4" cy="12.500" r="2.200"/></svg>
<div style="position:absolute;left:737.8px;top:333.4px;width:20.8px;height:25.0px;background:#f9f9f9;border:1px solid #cbcbcb;border-radius:4px;box-sizing:border-box;"></div>
<svg style="position:absolute;left:742.2px;top:337.4px;" width="12" height="17" viewBox="0 0 12 17"><path d="M2.500 1.200h7v6.800h-7z" fill="none" stroke="#000" stroke-width="2.200"/><path d="M6 8v3.500" stroke="#000" stroke-width="2.400"/><path d="M2.500 16.500v-2.300q0-2.700 3.500-2.700t3.500 2.700v2.300" fill="none" stroke="#000" stroke-width="2.200"/></svg>
<div style="position:absolute;left:0.6px;top:363.3px;width:713.4px;height:25.0px;background:linear-gradient(90deg,#dcdcdc 341.9px,#fafafa 341.9px);border:1px solid #cbcbcb;border-radius:4px;box-sizing:border-box;box-shadow:0 1px 0 #e2e2e2;"></div>
<div style="position:absolute;left:672.0px;top:364.3px;width:41.0px;height:23.0px;background:#e9e9e9;border-radius:0 3px 3px 0;"></div>
<div style="position:absolute;left:672.0px;top:364.3px;width:1.0px;height:23.0px;background:#cbcbcb;"></div>
<div style="position:absolute;left:693.0px;top:364.3px;width:1.0px;height:23.0px;background:#cbcbcb;"></div>
<svg style="position:absolute;left:675.5px;top:368.8px;" width="14" height="14" viewBox="0 0 14 14"><path d="M0.500 7h13" stroke="#000" stroke-width="2.500"/></svg>
<svg style="position:absolute;left:696.5px;top:368.8px;" width="14" height="14" viewBox="0 0 14 14"><path d="M0.500 7h13M7 0.500v13" stroke="#000" stroke-width="2.500"/></svg>
<span style="position:absolute;top:367.3px;line-height:16px;font-size:12px;letter-spacing:-0.258px;color:#1a1a1a;white-space:pre;left:8.1px;">Aspect Ratio</span>
<span style="position:absolute;top:367.8px;line-height:16px;font-size:12px;letter-spacing:-0.652px;color:#1a1a1a;white-space:pre;left:643.1px;">0.00</span>
<svg style="position:absolute;left:718.5px;top:368.3px;" width="15" height="15" viewBox="-0.500 0 15 15"><path d="M2.200 7.500A5.800 5.800 0 1 1 8 13.300" fill="none" stroke="#000" stroke-width="2"/><path d="M-0.300 5.300l5.400 0.400-3 4.300z"/><circle cx="4" cy="12.500" r="2.200"/></svg>
<div style="position:absolute;left:737.8px;top:363.3px;width:20.8px;height:25.0px;background:#f9f9f9;border:1px solid #cbcbcb;border-radius:4px;box-sizing:border-box;"></div>
<svg style="position:absolute;left:742.2px;top:367.3px;" width="12" height="17" viewBox="0 0 12 17"><path d="M2.500 1.200h7v6.800h-7z" fill="none" stroke="#000" stroke-width="2.200"/><path d="M6 8v3.500" stroke="#000" stroke-width="2.400"/><path d="M2.500 16.500v-2.300q0-2.700 3.500-2.700t3.500 2.700v2.300" fill="none" stroke="#000" stroke-width="2.200"/></svg>
<div style="position:absolute;left:0.6px;top:393.2px;width:713.4px;height:25.0px;background:linear-gradient(90deg,#dcdcdc 341.9px,#fafafa 341.9px);border:1px solid #cbcbcb;border-radius:4px;box-sizing:border-box;box-shadow:0 1px 0 #e2e2e2;"></div>
<div style="position:absolute;left:672.0px;top:394.2px;width:41.0px;height:23.0px;background:#e9e9e9;border-radius:0 3px 3px 0;"></div>
<div style="position:absolute;left:672.0px;top:394.2px;width:1.0px;height:23.0px;background:#cbcbcb;"></div>
<div style="position:absolute;left:693.0px;top:394.2px;width:1.0px;height:23.0px;background:#cbcbcb;"></div>
<svg style="position:absolute;left:675.5px;top:398.7px;" width="14" height="14" viewBox="0 0 14 14"><path d="M0.500 7h13" stroke="#000" stroke-width="2.500"/></svg>
<svg style="position:absolute;left:696.5px;top:398.7px;" width="14" height="14" viewBox="0 0 14 14"><path d="M0.500 7h13M7 0.500v13" stroke="#000" stroke-width="2.500"/></svg>
<span style="position:absolute;top:397.2px;line-height:16px;font-size:12px;letter-spacing:0.002px;color:#1a1a1a;white-space:pre;left:8.1px;">Angle</span>
<span style="position:absolute;top:397.7px;line-height:16px;font-size:12px;letter-spacing:-0.652px;color:#1a1a1a;white-space:pre;left:643.1px;">0.00</span>
<svg style="position:absolute;left:718.5px;top:398.2px;" width="15" height="15" viewBox="-0.500 0 15 15"><path d="M2.200 7.500A5.800 5.800 0 1 1 8 13.300" fill="none" stroke="#000" stroke-width="2"/><path d="M-0.300 5.300l5.400 0.400-3 4.300z"/><circle cx="4" cy="12.500" r="2.200"/></svg>
<div style="position:absolute;left:737.8px;top:393.2px;width:20.8px;height:25.0px;background:#f9f9f9;border:1px solid #cbcbcb;border-radius:4px;box-sizing:border-box;"></div>
<svg style="position:absolute;left:742.2px;top:397.2px;" width="12" height="17" viewBox="0 0 12 17"><path d="M2.500 1.200h7v6.800h-7z" fill="none" stroke="#000" stroke-width="2.200"/><path d="M6 8v3.500" stroke="#000" stroke-width="2.400"/><path d="M2.500 16.500v-2.300q0-2.700 3.500-2.700t3.500 2.700v2.300" fill="none" stroke="#000" stroke-width="2.200"/></svg>
<div style="position:absolute;left:0.6px;top:423.1px;width:713.4px;height:25.0px;background:linear-gradient(90deg,#dcdcdc 100.9px,#fafafa 100.9px);border:1px solid #cbcbcb;border-radius:4px;box-sizing:border-box;box-shadow:0 1px 0 #e2e2e2;"></div>
<div style="position:absolute;left:672.0px;top:424.1px;width:41.0px;height:23.0px;background:#e9e9e9;border-radius:0 3px 3px 0;"></div>
<div style="position:absolute;left:672.0px;top:424.1px;width:1.0px;height:23.0px;background:#cbcbcb;"></div>
<div style="position:absolute;left:693.0px;top:424.1px;width:1.0px;height:23.0px;background:#cbcbcb;"></div>
<svg style="position:absolute;left:675.5px;top:428.6px;" width="14" height="14" viewBox="0 0 14 14"><path d="M0.500 7h13" stroke="#000" stroke-width="2.500"/></svg>
<svg style="position:absolute;left:696.5px;top:428.6px;" width="14" height="14" viewBox="0 0 14 14"><path d="M0.500 7h13M7 0.500v13" stroke="#000" stroke-width="2.500"/></svg>
<span style="position:absolute;top:427.1px;line-height:16px;font-size:12px;letter-spacing:-0.344px;color:#1a1a1a;white-space:pre;left:8.1px;">Spacing</span>
<span style="position:absolute;top:427.6px;line-height:16px;font-size:12px;letter-spacing:-0.952px;color:#1a1a1a;white-space:pre;left:644.0px;">10.0</span>
<svg style="position:absolute;left:718.5px;top:428.1px;" width="15" height="15" viewBox="-0.500 0 15 15"><path d="M2.200 7.500A5.800 5.800 0 1 1 8 13.300" fill="none" stroke="#000" stroke-width="2"/><path d="M-0.300 5.300l5.400 0.400-3 4.300z"/><circle cx="4" cy="12.500" r="2.200"/></svg>
<div style="position:absolute;left:737.8px;top:423.1px;width:20.8px;height:25.0px;background:#f9f9f9;border:1px solid #cbcbcb;border-radius:4px;box-sizing:border-box;"></div>
<svg style="position:absolute;left:742.2px;top:427.1px;" width="12" height="17" viewBox="0 0 12 17"><path d="M2.500 1.200h7v6.800h-7z" fill="none" stroke="#000" stroke-width="2.200"/><path d="M6 8v3.500" stroke="#000" stroke-width="2.400"/><path d="M2.500 16.500v-2.300q0-2.700 3.500-2.700t3.500 2.700v2.300" fill="none" stroke="#000" stroke-width="2.200"/></svg>
<div style="position:absolute;left:0.6px;top:453.0px;width:713.4px;height:25.0px;background:linear-gradient(90deg,#dcdcdc 759.4px,#fafafa 759.4px);border:1px solid #cbcbcb;border-radius:4px;box-sizing:border-box;box-shadow:0 1px 0 #e2e2e2;"></div>
<div style="position:absolute;left:672.0px;top:454.0px;width:41.0px;height:23.0px;background:#e9e9e9;border-radius:0 3px 3px 0;"></div>
<div style="position:absolute;left:672.0px;top:454.0px;width:1.0px;height:23.0px;background:#cbcbcb;"></div>
<div style="position:absolute;left:693.0px;top:454.0px;width:1.0px;height:23.0px;background:#cbcbcb;"></div>
<svg style="position:absolute;left:675.5px;top:458.5px;" width="14" height="14" viewBox="0 0 14 14"><path d="M0.500 7h13" stroke="#000" stroke-width="2.500"/></svg>
<svg style="position:absolute;left:696.5px;top:458.5px;" width="14" height="14" viewBox="0 0 14 14"><path d="M0.500 7h13M7 0.500v13" stroke="#b9b9b9" stroke-width="2.500"/></svg>
<span style="position:absolute;top:457.0px;line-height:16px;font-size:12px;letter-spacing:-0.422px;color:#1a1a1a;white-space:pre;left:8.1px;">Hardness</span>
<span style="position:absolute;top:457.5px;line-height:16px;font-size:12px;letter-spacing:-0.907px;color:#1a1a1a;white-space:pre;left:638.1px;">100.0</span>
<svg style="position:absolute;left:718.5px;top:458.0px;" width="15" height="15" viewBox="-0.500 0 15 15"><path d="M2.200 7.500A5.800 5.800 0 1 1 8 13.300" fill="none" stroke="#000" stroke-width="2"/><path d="M-0.300 5.300l5.400 0.400-3 4.300z"/><circle cx="4" cy="12.500" r="2.200"/></svg>
<div style="position:absolute;left:737.8px;top:453.0px;width:20.8px;height:25.0px;background:#f9f9f9;border:1px solid #cbcbcb;border-radius:4px;box-sizing:border-box;"></div>
<svg style="position:absolute;left:742.2px;top:457.0px;" width="12" height="17" viewBox="0 0 12 17"><path d="M2.500 1.200h7v6.800h-7z" fill="none" stroke="#000" stroke-width="2.200"/><path d="M6 8v3.500" stroke="#000" stroke-width="2.400"/><path d="M2.500 16.500v-2.300q0-2.700 3.500-2.700t3.500 2.700v2.300" fill="none" stroke="#000" stroke-width="2.200"/></svg>
<div style="position:absolute;left:0.6px;top:482.9px;width:713.4px;height:25.0px;background:linear-gradient(90deg,#dcdcdc 341.9px,#fafafa 341.9px);border:1px solid #cbcbcb;border-radius:4px;box-sizing:border-box;box-shadow:0 1px 0 #e2e2e2;"></div>
<div style="position:absolute;left:672.0px;top:483.9px;width:41.0px;height:23.0px;background:#e9e9e9;border-radius:0 3px 3px 0;"></div>
<div style="position:absolute;left:672.0px;top:483.9px;width:1.0px;height:23.0px;background:#cbcbcb;"></div>
<div style="position:absolute;left:693.0px;top:483.9px;width:1.0px;height:23.0px;background:#cbcbcb;"></div>
<svg style="position:absolute;left:675.5px;top:488.4px;" width="14" height="14" viewBox="0 0 14 14"><path d="M0.500 7h13" stroke="#000" stroke-width="2.500"/></svg>
<svg style="position:absolute;left:696.5px;top:488.4px;" width="14" height="14" viewBox="0 0 14 14"><path d="M0.500 7h13M7 0.500v13" stroke="#000" stroke-width="2.500"/></svg>
<span style="position:absolute;top:486.9px;line-height:16px;font-size:12px;letter-spacing:-0.518px;color:#1a1a1a;white-space:pre;left:8.1px;">Force</span>
<span style="position:absolute;top:487.4px;line-height:16px;font-size:12px;letter-spacing:-0.952px;color:#1a1a1a;white-space:pre;left:644.0px;">50.0</span>
<svg style="position:absolute;left:718.5px;top:487.9px;" width="15" height="15" viewBox="-0.500 0 15 15"><path d="M2.200 7.500A5.800 5.800 0 1 1 8 13.300" fill="none" stroke="#000" stroke-width="2"/><path d="M-0.300 5.300l5.400 0.400-3 4.300z"/><circle cx="4" cy="12.500" r="2.200"/></svg>
<div style="position:absolute;left:4.6px;top:516.0px;width:14.5px;height:14.5px;background:#f9f9f9;border:1px solid #cfcfcf;border-radius:3px;box-sizing:border-box;"></div>
<svg style="position:absolute;left:6.1px;top:517.5px;" width="12" height="12" viewBox="0 0 12 12"><path d="M1.500 6l3 3.500L10.500 2" fill="none" stroke="#000" stroke-width="2.400"/></svg>
<span style="position:absolute;top:515.5px;line-height:16px;font-size:12px;letter-spacing:-0.646px;color:#1a1a1a;white-space:pre;font-weight:bold;left:24.2px;">Enable dynamics</span>
<div style="position:absolute;left:13.0px;top:537.0px;width:37.5px;height:37.5px;background:#f9f9f9;border:1px solid #cfcfcf;border-radius:3px;box-sizing:border-box;"></div>
<div style="position:absolute;left:15.0px;top:539.0px;width:33.5px;height:33.5px;background:#ffffff;border:1.500px solid #000;box-sizing:border-box;"></div>
<svg style="position:absolute;left:17.0px;top:541.0px;" width="30" height="30" viewBox="0 0 30 30"><circle cx="5" cy="5" r="2.800"/><circle cx="12.500" cy="5" r="2.800"/><circle cx="5" cy="12.500" r="2.800"/><path d="M9 17c0-6 8-8 11-3l4-4v16h-14l4-4c-3 0-5-2-5-5z"/></svg>
<span style="position:absolute;top:536.5px;line-height:16px;font-size:12px;letter-spacing:-0.239px;color:#1a1a1a;white-space:pre;left:54.3px;">Dynamics</span>
<div style="position:absolute;left:55.0px;top:554.0px;width:679.0px;height:21.0px;background:#fafafa;border:1px solid #cbcbcb;border-radius:4px;box-sizing:border-box;"></div>
<span style="position:absolute;top:556.5px;line-height:16px;font-size:12px;letter-spacing:-0.269px;color:#1a1a1a;white-space:pre;left:63.0px;">Pressure Opacity</span>
<svg style="position:absolute;left:740.0px;top:560.0px;" width="16" height="15" viewBox="0 0 16 15"><path d="M0 1.500h4.500M0 5.300h4.500M0 9.100h3.500M0 13.600h12.500" stroke="#000" stroke-width="1.700"/><path d="M13.600 0.300l2.100 2.100-8.600 8.600-3 1 1-3z"/></svg>
<span style="position:absolute;top:578.5px;line-height:16px;font-size:12px;letter-spacing:-0.515px;color:#1a1a1a;white-space:pre;font-weight:bold;left:12.4px;">Fade Options</span>
<div style="position:absolute;left:24.8px;top:597.3px;width:685.6px;height:25.3px;background:linear-gradient(90deg,#dcdcdc 12.2px,#fafafa 12.2px);border:1px solid #cbcbcb;border-radius:4px;box-sizing:border-box;box-shadow:0 1px 0 #e2e2e2;"></div>
<div style="position:absolute;left:668.6px;top:598.3px;width:40.8px;height:23.3px;background:#e9e9e9;border-radius:0 3px 3px 0;"></div>
<div style="position:absolute;left:668.6px;top:598.3px;width:1.0px;height:23.3px;background:#cbcbcb;"></div>
<div style="position:absolute;left:689.3px;top:598.3px;width:1.0px;height:23.3px;background:#cbcbcb;"></div>
<svg style="position:absolute;left:672.0px;top:602.9px;" width="14" height="14" viewBox="0 0 14 14"><path d="M0.500 7h13" stroke="#b9b9b9" stroke-width="2.500"/></svg>
<svg style="position:absolute;left:692.8px;top:602.9px;" width="14" height="14" viewBox="0 0 14 14"><path d="M0.500 7h13M7 0.500v13" stroke="#000" stroke-width="2.500"/></svg>
<span style="position:absolute;top:601.4px;line-height:16px;font-size:12px;letter-spacing:-0.278px;color:#1a1a1a;white-space:pre;left:31.0px;">Fade length</span>
<span style="position:absolute;top:601.9px;line-height:16px;font-size:12px;letter-spacing:-0.667px;color:#1a1a1a;white-space:pre;left:654.5px;">0</span>
<div style="position:absolute;left:713.5px;top:597.3px;width:45.0px;height:25.3px;background:#dcdcdc;border:1px solid #cbcbcb;border-radius:4px;box-sizing:border-box;"></div>
<span style="position:absolute;top:601.7px;line-height:16px;font-size:12px;letter-spacing:-0.673px;color:#1a1a1a;white-space:pre;left:718.5px;">px</span>
<svg style="position:absolute;left:741.5px;top:604.7px;" width="12" height="12" viewBox="0 0 12 12"><path d="M1 3.500l5 5 5-5" fill="none" stroke="#000" stroke-width="2.300"/></svg>
<div style="position:absolute;left:24.8px;top:626.0px;width:733.8px;height:24.5px;background:#dcdcdc;border:1px solid #cbcbcb;border-radius:4px;box-sizing:border-box;"></div>
<span style="position:absolute;top:629.5px;line-height:16px;font-size:12px;letter-spacing:-0.639px;color:#1a1a1a;white-space:pre;left:29.5px;">Repeat</span>
<span style="position:absolute;top:629.5px;line-height:16px;font-size:12px;letter-spacing:-0.045px;color:#1a1a1a;white-space:pre;left:658.0px;">None (extend)</span>
<svg style="position:absolute;left:741.5px;top:632.5px;" width="12" height="12" viewBox="0 0 12 12"><path d="M1 3.500l5 5 5-5" fill="none" stroke="#000" stroke-width="2.300"/></svg>
<div style="position:absolute;left:28.0px;top:655.8px;width:14.5px;height:14.5px;background:#f9f9f9;border:1px solid #cfcfcf;border-radius:3px;box-sizing:border-box;"></div>
<span style="position:absolute;top:655.5px;line-height:16px;font-size:12px;letter-spacing:-0.780px;color:#1a1a1a;white-space:pre;left:48.0px;">Reverse</span>
<div style="position:absolute;left:4.6px;top:681.0px;width:14.5px;height:14.5px;background:#f9f9f9;border:1px solid #cfcfcf;border-radius:3px;box-sizing:border-box;"></div>
<span style="position:absolute;top:680.6px;line-height:16px;font-size:12px;letter-spacing:-0.319px;color:#1a1a1a;white-space:pre;font-weight:bold;left:24.2px;">Apply Jitter</span>
<div style="position:absolute;left:4.6px;top:706.0px;width:14.5px;height:14.5px;background:#f9f9f9;border:1px solid #cfcfcf;border-radius:3px;box-sizing:border-box;"></div>
<span style="position:absolute;top:705.7px;line-height:16px;font-size:12px;letter-spacing:-0.168px;color:#1a1a1a;white-space:pre;font-weight:bold;left:24.2px;">Smooth stroke</span>
<div style="position:absolute;left:4.6px;top:731.0px;width:14.5px;height:14.5px;background:#f9f9f9;border:1px solid #cfcfcf;border-radius:3px;box-sizing:border-box;"></div>
<span style="position:absolute;top:730.8px;line-height:16px;font-size:12px;letter-spacing:-0.052px;color:#1a1a1a;white-space:pre;left:24.2px;">Lock brush to view</span>
<div style="position:absolute;left:4.6px;top:757.0px;width:14.5px;height:14.5px;background:#f9f9f9;border:1px solid #cfcfcf;border-radius:3px;box-sizing:border-box;"></div>
<span style="position:absolute;top:756.2px;line-height:16px;font-size:12px;letter-spacing:-0.120px;color:#1a1a1a;white-space:pre;left:24.2px;">Incremental</span>
<div style="position:absolute;left:4.6px;top:782.0px;width:14.5px;height:14.5px;background:#f9f9f9;border:1px solid #cfcfcf;border-radius:3px;box-sizing:border-box;"></div>
<span style="position:absolute;top:781.0px;line-height:16px;font-size:12px;letter-spacing:-0.130px;color:#1a1a1a;white-space:pre;left:24.2px;">Hard edge</span>
<div style="position:absolute;left:4.6px;top:807.0px;width:14.5px;height:14.5px;background:#f9f9f9;border:1px solid #cfcfcf;border-radius:3px;box-sizing:border-box;"></div>
<span style="position:absolute;top:806.2px;line-height:16px;font-size:12px;letter-spacing:-0.137px;color:#1a1a1a;white-space:pre;left:24.2px;">Anti erase  (Alt)</span>
<svg style="position:absolute;left:87.5px;top:1035.0px;" width="13" height="16" viewBox="0 0 13 16"><path d="M5.500 0h2v6h2.500l-3.500 4-3.500-4h2.500z"/><path d="M1 10h11v5H1z"/><rect x="4" y="12" width="5" height="1.400" fill="#ebebeb"/></svg>
<svg style="position:absolute;left:277.0px;top:1035.0px;" width="16" height="16" viewBox="0 0 16 16"><path d="M4 3.500A6 6 0 1 1 2.500 10" fill="none" stroke="#000" stroke-width="2"/><path d="M0 0l6 .5L1.500 6z"/></svg>
<svg style="position:absolute;left:466.5px;top:1035.0px;" width="16" height="16" viewBox="0 0 16 16"><rect width="16" height="16" rx="1.500"/><path d="M4 4l8 8M12 4l-8 8" stroke="#fff" stroke-width="2.400"/></svg>
<svg style="position:absolute;left:657.0px;top:1035.0px;" width="16" height="16" viewBox="0 0 16 16"><path d="M9 2.500A6 6 0 1 1 4.500 13" fill="none" stroke="#000" stroke-width="1.800"/><path d="M10 0L4.500 2.500 9.500 6z"/><circle cx="3.500" cy="13.500" r="2"/></svg>
<div style="position:absolute;left:775.0px;top:56.0px;width:49.5px;height:50.0px;background:#ececec;border:1px solid #dcdcdc;border-bottom:none;box-sizing:border-box;"></div>
<div style="position:absolute;left:830.2px;top:56.0px;width:83.8px;height:47.3px;background:#fbfbfb;"></div>
<div style="position:absolute;left:830.2px;top:103.3px;width:83.8px;height:3.5px;background:#c2c2c2;"></div>
<svg style="position:absolute;left:782px;top:58.500px" width="35" height="46"><use href="#moises" width="35" height="46"/></svg>
<svg style="position:absolute;left:838px;top:58px" width="34" height="47"><use href="#rosas" width="34" height="47"/></svg>
<svg style="position:absolute;left:890.0px;top:75.2px;" width="14" height="14" viewBox="0 0 14 14"><rect x="1" y="1" width="12" height="12" fill="#fff" stroke="#222" stroke-width="1.600"/><path d="M3.500 3.500l7 7M10.500 3.500l-7 7" stroke="#222" stroke-width="1.400"/></svg>
<div style="position:absolute;left:768.0px;top:106.5px;width:1685.0px;height:1.0px;background:#cfcfcf;"></div>
<svg style="position:absolute;left:768.0px;top:107.0px;shape-rendering:crispEdges;" width="1667" height="19.5" viewBox="0 0 1667 19.5"><path d="M21.50 2.500V19" stroke="#000" stroke-width="1"/><path d="M34.04 13.500V19" stroke="#000" stroke-width="1"/><path d="M46.59 11.500V19" stroke="#000" stroke-width="1"/><path d="M59.13 13.500V19" stroke="#000" stroke-width="1"/><path d="M71.68 11.500V19" stroke="#000" stroke-width="1"/><path d="M84.22 13.500V19" stroke="#000" stroke-width="1"/><path d="M96.77 11.500V19" stroke="#000" stroke-width="1"/><path d="M109.31 13.500V19" stroke="#000" stroke-width="1"/><path d="M121.86 11.500V19" stroke="#000" stroke-width="1"/><path d="M134.40 13.500V19" stroke="#000" stroke-width="1"/><path d="M146.95 2.500V19" stroke="#000" stroke-width="1"/><path d="M159.49 13.500V19" stroke="#000" stroke-width="1"/><path d="M172.04 11.500V19" stroke="#000" stroke-width="1"/><path d="M184.58 13.500V19" stroke="#000" stroke-width="1"/><path d="M197.13 11.500V19" stroke="#000" stroke-width="1"/><path d="M209.67 13.500V19" stroke="#000" stroke-width="1"/><path d="M222.22 11.500V19" stroke="#000" stroke-width="1"/><path d="M234.76 13.500V19" stroke="#000" stroke-width="1"/><path d="M247.31 11.500V19" stroke="#000" stroke-width="1"/><path d="M259.86 13.500V19" stroke="#000" stroke-width="1"/><path d="M272.40 2.500V19" stroke="#000" stroke-width="1"/><path d="M284.94 13.500V19" stroke="#000" stroke-width="1"/><path d="M297.49 11.500V19" stroke="#000" stroke-width="1"/><path d="M310.03 13.500V19" stroke="#000" stroke-width="1"/><path d="M322.58 11.500V19" stroke="#000" stroke-width="1"/><path d="M335.12 13.500V19" stroke="#000" stroke-width="1"/><path d="M347.67 11.500V19" stroke="#000" stroke-width="1"/><path d="M360.21 13.500V19" stroke="#000" stroke-width="1"/><path d="M372.76 11.500V19" stroke="#000" stroke-width="1"/><path d="M385.30 13.500V19" stroke="#000" stroke-width="1"/><path d="M397.85 2.500V19" stroke="#000" stroke-width="1"/><path d="M410.39 13.500V19" stroke="#000" stroke-width="1"/><path d="M422.94 11.500V19" stroke="#000" stroke-width="1"/><path d="M435.48 13.500V19" stroke="#000" stroke-width="1"/><path d="M448.03 11.500V19" stroke="#000" stroke-width="1"/><path d="M460.58 13.500V19" stroke="#000" stroke-width="1"/><path d="M473.12 11.500V19" stroke="#000" stroke-width="1"/><path d="M485.66 13.500V19" stroke="#000" stroke-width="1"/><path d="M498.21 11.500V19" stroke="#000" stroke-width="1"/><path d="M510.75 13.500V19" stroke="#000" stroke-width="1"/><path d="M523.30 2.500V19" stroke="#000" stroke-width="1"/><path d="M535.85 13.500V19" stroke="#000" stroke-width="1"/><path d="M548.39 11.500V19" stroke="#000" stroke-width="1"/><path d="M560.93 13.500V19" stroke="#000" stroke-width="1"/><path d="M573.48 11.500V19" stroke="#000" stroke-width="1"/><path d="M586.02 13.500V19" stroke="#000" stroke-width="1"/><path d="M598.57 11.500V19" stroke="#000" stroke-width="1"/><path d="M611.12 13.500V19" stroke="#000" stroke-width="1"/><path d="M623.66 11.500V19" stroke="#000" stroke-width="1"/><path d="M636.20 13.500V19" stroke="#000" stroke-width="1"/><path d="M648.75 2.500V19" stroke="#000" stroke-width="1"/><path d="M661.30 13.500V19" stroke="#000" stroke-width="1"/><path d="M673.84 11.500V19" stroke="#000" stroke-width="1"/><path d="M686.38 13.500V19" stroke="#000" stroke-width="1"/><path d="M698.93 11.500V19" stroke="#000" stroke-width="1"/><path d="M711.47 13.500V19" stroke="#000" stroke-width="1"/><path d="M724.02 11.500V19" stroke="#000" stroke-width="1"/><path d="M736.57 13.500V19" stroke="#000" stroke-width="1"/><path d="M749.11 11.500V19" stroke="#000" stroke-width="1"/><path d="M761.65 13.500V19" stroke="#000" stroke-width="1"/><path d="M774.20 2.500V19" stroke="#000" stroke-width="1"/><path d="M786.74 13.500V19" stroke="#000" stroke-width="1"/><path d="M799.29 11.500V19" stroke="#000" stroke-width="1"/><path d="M811.84 13.500V19" stroke="#000" stroke-width="1"/><path d="M824.38 11.500V19" stroke="#000" stroke-width="1"/><path d="M836.92 13.500V19" stroke="#000" stroke-width="1"/><path d="M849.47 11.500V19" stroke="#000" stroke-width="1"/><path d="M862.01 13.500V19" stroke="#000" stroke-width="1"/><path d="M874.56 11.500V19" stroke="#000" stroke-width="1"/><path d="M887.11 13.500V19" stroke="#000" stroke-width="1"/><path d="M899.65 2.500V19" stroke="#000" stroke-width="1"/><path d="M912.19 13.500V19" stroke="#000" stroke-width="1"/><path d="M924.74 11.500V19" stroke="#000" stroke-width="1"/><path d="M937.28 13.500V19" stroke="#000" stroke-width="1"/><path d="M949.83 11.500V19" stroke="#000" stroke-width="1"/><path d="M962.38 13.500V19" stroke="#000" stroke-width="1"/><path d="M974.92 11.500V19" stroke="#000" stroke-width="1"/><path d="M987.46 13.500V19" stroke="#000" stroke-width="1"/><path d="M1000.01 11.500V19" stroke="#000" stroke-width="1"/><path d="M1012.55 13.500V19" stroke="#000" stroke-width="1"/><path d="M1025.10 2.500V19" stroke="#000" stroke-width="1"/><path d="M1037.64 13.500V19" stroke="#000" stroke-width="1"/><path d="M1050.19 11.500V19" stroke="#000" stroke-width="1"/><path d="M1062.74 13.500V19" stroke="#000" stroke-width="1"/><path d="M1075.28 11.500V19" stroke="#000" stroke-width="1"/><path d="M1087.82 13.500V19" stroke="#000" stroke-width="1"/><path d="M1100.37 11.500V19" stroke="#000" stroke-width="1"/><path d="M1112.91 13.500V19" stroke="#000" stroke-width="1"/><path d="M1125.46 11.500V19" stroke="#000" stroke-width="1"/><path d="M1138.01 13.500V19" stroke="#000" stroke-width="1"/><path d="M1150.55 2.500V19" stroke="#000" stroke-width="1"/><path d="M1163.10 13.500V19" stroke="#000" stroke-width="1"/><path d="M1175.64 11.500V19" stroke="#000" stroke-width="1"/><path d="M1188.18 13.500V19" stroke="#000" stroke-width="1"/><path d="M1200.73 11.500V19" stroke="#000" stroke-width="1"/><path d="M1213.28 13.500V19" stroke="#000" stroke-width="1"/><path d="M1225.82 11.500V19" stroke="#000" stroke-width="1"/><path d="M1238.37 13.500V19" stroke="#000" stroke-width="1"/><path d="M1250.91 11.500V19" stroke="#000" stroke-width="1"/><path d="M1263.45 13.500V19" stroke="#000" stroke-width="1"/><path d="M1276.00 2.500V19" stroke="#000" stroke-width="1"/><path d="M1288.55 13.500V19" stroke="#000" stroke-width="1"/><path d="M1301.09 11.500V19" stroke="#000" stroke-width="1"/><path d="M1313.64 13.500V19" stroke="#000" stroke-width="1"/><path d="M1326.18 11.500V19" stroke="#000" stroke-width="1"/><path d="M1338.72 13.500V19" stroke="#000" stroke-width="1"/><path d="M1351.27 11.500V19" stroke="#000" stroke-width="1"/><path d="M1363.82 13.500V19" stroke="#000" stroke-width="1"/><path d="M1376.36 11.500V19" stroke="#000" stroke-width="1"/><path d="M1388.90 13.500V19" stroke="#000" stroke-width="1"/><path d="M1401.45 2.500V19" stroke="#000" stroke-width="1"/><path d="M1413.99 13.500V19" stroke="#000" stroke-width="1"/><path d="M1426.54 11.500V19" stroke="#000" stroke-width="1"/><path d="M1439.09 13.500V19" stroke="#000" stroke-width="1"/><path d="M1451.63 11.500V19" stroke="#000" stroke-width="1"/><path d="M1464.18 13.500V19" stroke="#000" stroke-width="1"/><path d="M1476.72 11.500V19" stroke="#000" stroke-width="1"/><path d="M1489.26 13.500V19" stroke="#000" stroke-width="1"/><path d="M1501.81 11.500V19" stroke="#000" stroke-width="1"/><path d="M1514.36 13.500V19" stroke="#000" stroke-width="1"/><path d="M1526.90 2.500V19" stroke="#000" stroke-width="1"/><path d="M1539.45 13.500V19" stroke="#000" stroke-width="1"/><path d="M1551.99 11.500V19" stroke="#000" stroke-width="1"/><path d="M1564.53 13.500V19" stroke="#000" stroke-width="1"/><path d="M1577.08 11.500V19" stroke="#000" stroke-width="1"/><path d="M1589.62 13.500V19" stroke="#000" stroke-width="1"/><path d="M1602.17 11.500V19" stroke="#000" stroke-width="1"/><path d="M1614.72 13.500V19" stroke="#000" stroke-width="1"/><path d="M1627.26 11.500V19" stroke="#000" stroke-width="1"/><path d="M1639.81 13.500V19" stroke="#000" stroke-width="1"/><path d="M1652.35 2.500V19" stroke="#000" stroke-width="1"/><path d="M1664.89 13.500V19" stroke="#000" stroke-width="1"/></svg>
<span style="position:absolute;top:108.0px;line-height:16px;font-size:12px;letter-spacing:-0.767px;color:#1a1a1a;white-space:pre;left:792.5px;letter-spacing:-0.600px;">-2000</span>
<span style="position:absolute;top:108.0px;line-height:16px;font-size:12px;letter-spacing:-0.767px;color:#1a1a1a;white-space:pre;left:917.9px;letter-spacing:-0.600px;">-1500</span>
<span style="position:absolute;top:108.0px;line-height:16px;font-size:12px;letter-spacing:-0.767px;color:#1a1a1a;white-space:pre;left:1043.4px;letter-spacing:-0.600px;">-1000</span>
<span style="position:absolute;top:108.0px;line-height:16px;font-size:12px;letter-spacing:-0.801px;color:#1a1a1a;white-space:pre;left:1168.8px;letter-spacing:-0.600px;">-500</span>
<span style="position:absolute;top:108.0px;line-height:16px;font-size:12px;letter-spacing:-0.667px;color:#1a1a1a;white-space:pre;left:1294.3px;letter-spacing:-0.600px;">0</span>
<span style="position:absolute;top:108.0px;line-height:16px;font-size:12px;letter-spacing:-1.001px;color:#1a1a1a;white-space:pre;left:1419.8px;letter-spacing:-0.600px;">500</span>
<span style="position:absolute;top:108.0px;line-height:16px;font-size:12px;letter-spacing:-0.890px;color:#1a1a1a;white-space:pre;left:1545.2px;letter-spacing:-0.600px;">1000</span>
<span style="position:absolute;top:108.0px;line-height:16px;font-size:12px;letter-spacing:-0.890px;color:#1a1a1a;white-space:pre;left:1670.7px;letter-spacing:-0.600px;">1500</span>
<span style="position:absolute;top:108.0px;line-height:16px;font-size:12px;letter-spacing:-0.890px;color:#1a1a1a;white-space:pre;left:1796.1px;letter-spacing:-0.600px;">2000</span>
<span style="position:absolute;top:108.0px;line-height:16px;font-size:12px;letter-spacing:-0.890px;color:#1a1a1a;white-space:pre;left:1921.5px;letter-spacing:-0.600px;">2500</span>
<span style="position:absolute;top:108.0px;line-height:16px;font-size:12px;letter-spacing:-0.890px;color:#1a1a1a;white-space:pre;left:2047.0px;letter-spacing:-0.600px;">3000</span>
<span style="position:absolute;top:108.0px;line-height:16px;font-size:12px;letter-spacing:-0.890px;color:#1a1a1a;white-space:pre;left:2172.4px;letter-spacing:-0.600px;">3500</span>
<span style="position:absolute;top:108.0px;line-height:16px;font-size:12px;letter-spacing:-0.890px;color:#1a1a1a;white-space:pre;left:2297.9px;letter-spacing:-0.600px;">4000</span>
<span style="position:absolute;top:108.0px;line-height:16px;font-size:12px;letter-spacing:-1.335px;color:#1a1a1a;white-space:pre;left:2423.3px;letter-spacing:-0.600px;">45</span>
<svg style="position:absolute;left:768.0px;top:107.0px;shape-rendering:crispEdges;" width="19" height="900" viewBox="0 0 19 900"><path d="M1 19.50H18" stroke="#000" stroke-width="1"/><path d="M12.500 32.04H18" stroke="#000" stroke-width="1"/><path d="M10.500 44.59H18" stroke="#000" stroke-width="1"/><path d="M12.500 57.13H18" stroke="#000" stroke-width="1"/><path d="M10.500 69.68H18" stroke="#000" stroke-width="1"/><path d="M12.500 82.22H18" stroke="#000" stroke-width="1"/><path d="M10.500 94.77H18" stroke="#000" stroke-width="1"/><path d="M12.500 107.31H18" stroke="#000" stroke-width="1"/><path d="M10.500 119.86H18" stroke="#000" stroke-width="1"/><path d="M12.500 132.41H18" stroke="#000" stroke-width="1"/><path d="M1 144.95H18" stroke="#000" stroke-width="1"/><path d="M12.500 157.50H18" stroke="#000" stroke-width="1"/><path d="M10.500 170.04H18" stroke="#000" stroke-width="1"/><path d="M12.500 182.59H18" stroke="#000" stroke-width="1"/><path d="M10.500 195.13H18" stroke="#000" stroke-width="1"/><path d="M12.500 207.68H18" stroke="#000" stroke-width="1"/><path d="M10.500 220.22H18" stroke="#000" stroke-width="1"/><path d="M12.500 232.76H18" stroke="#000" stroke-width="1"/><path d="M10.500 245.31H18" stroke="#000" stroke-width="1"/><path d="M12.500 257.86H18" stroke="#000" stroke-width="1"/><path d="M1 270.40H18" stroke="#000" stroke-width="1"/><path d="M12.500 282.94H18" stroke="#000" stroke-width="1"/><path d="M10.500 295.49H18" stroke="#000" stroke-width="1"/><path d="M12.500 308.04H18" stroke="#000" stroke-width="1"/><path d="M10.500 320.58H18" stroke="#000" stroke-width="1"/><path d="M12.500 333.12H18" stroke="#000" stroke-width="1"/><path d="M10.500 345.67H18" stroke="#000" stroke-width="1"/><path d="M12.500 358.22H18" stroke="#000" stroke-width="1"/><path d="M10.500 370.76H18" stroke="#000" stroke-width="1"/><path d="M12.500 383.31H18" stroke="#000" stroke-width="1"/><path d="M1 395.85H18" stroke="#000" stroke-width="1"/><path d="M12.500 408.39H18" stroke="#000" stroke-width="1"/><path d="M10.500 420.94H18" stroke="#000" stroke-width="1"/><path d="M12.500 433.49H18" stroke="#000" stroke-width="1"/><path d="M10.500 446.03H18" stroke="#000" stroke-width="1"/><path d="M12.500 458.58H18" stroke="#000" stroke-width="1"/><path d="M10.500 471.12H18" stroke="#000" stroke-width="1"/><path d="M12.500 483.66H18" stroke="#000" stroke-width="1"/><path d="M10.500 496.21H18" stroke="#000" stroke-width="1"/><path d="M12.500 508.75H18" stroke="#000" stroke-width="1"/><path d="M1 521.30H18" stroke="#000" stroke-width="1"/><path d="M12.500 533.85H18" stroke="#000" stroke-width="1"/><path d="M10.500 546.39H18" stroke="#000" stroke-width="1"/><path d="M12.500 558.94H18" stroke="#000" stroke-width="1"/><path d="M10.500 571.48H18" stroke="#000" stroke-width="1"/><path d="M12.500 584.02H18" stroke="#000" stroke-width="1"/><path d="M10.500 596.57H18" stroke="#000" stroke-width="1"/><path d="M12.500 609.12H18" stroke="#000" stroke-width="1"/><path d="M10.500 621.66H18" stroke="#000" stroke-width="1"/><path d="M12.500 634.21H18" stroke="#000" stroke-width="1"/><path d="M1 646.75H18" stroke="#000" stroke-width="1"/><path d="M12.500 659.30H18" stroke="#000" stroke-width="1"/><path d="M10.500 671.84H18" stroke="#000" stroke-width="1"/><path d="M12.500 684.38H18" stroke="#000" stroke-width="1"/><path d="M10.500 696.93H18" stroke="#000" stroke-width="1"/><path d="M12.500 709.48H18" stroke="#000" stroke-width="1"/><path d="M10.500 722.02H18" stroke="#000" stroke-width="1"/><path d="M12.500 734.57H18" stroke="#000" stroke-width="1"/><path d="M10.500 747.11H18" stroke="#000" stroke-width="1"/><path d="M12.500 759.66H18" stroke="#000" stroke-width="1"/><path d="M1 772.20H18" stroke="#000" stroke-width="1"/><path d="M12.500 784.75H18" stroke="#000" stroke-width="1"/><path d="M10.500 797.29H18" stroke="#000" stroke-width="1"/><path d="M12.500 809.84H18" stroke="#000" stroke-width="1"/><path d="M10.500 822.38H18" stroke="#000" stroke-width="1"/><path d="M12.500 834.93H18" stroke="#000" stroke-width="1"/><path d="M10.500 847.47H18" stroke="#000" stroke-width="1"/><path d="M12.500 860.01H18" stroke="#000" stroke-width="1"/><path d="M10.500 872.56H18" stroke="#000" stroke-width="1"/><path d="M12.500 885.11H18" stroke="#000" stroke-width="1"/><path d="M1 897.65H18" stroke="#000" stroke-width="1"/></svg>
<span style="position:absolute;top:125.0px;line-height:16px;font-size:12px;letter-spacing:-0.667px;color:#1a1a1a;white-space:pre;left:769.5px;">0</span>
<span style="position:absolute;top:250.4px;line-height:16px;font-size:12px;letter-spacing:-0.667px;color:#1a1a1a;white-space:pre;left:769.5px;">5</span>
<span style="position:absolute;top:261.4px;line-height:16px;font-size:12px;letter-spacing:-0.667px;color:#1a1a1a;white-space:pre;left:769.5px;">0</span>
<span style="position:absolute;top:272.4px;line-height:16px;font-size:12px;letter-spacing:-0.667px;color:#1a1a1a;white-space:pre;left:769.5px;">0</span>
<span style="position:absolute;top:375.9px;line-height:16px;font-size:12px;letter-spacing:-0.667px;color:#1a1a1a;white-space:pre;left:769.5px;">1</span>
<span style="position:absolute;top:386.9px;line-height:16px;font-size:12px;letter-spacing:-0.667px;color:#1a1a1a;white-space:pre;left:769.5px;">0</span>
<span style="position:absolute;top:397.9px;line-height:16px;font-size:12px;letter-spacing:-0.667px;color:#1a1a1a;white-space:pre;left:769.5px;">0</span>
<span style="position:absolute;top:408.9px;line-height:16px;font-size:12px;letter-spacing:-0.667px;color:#1a1a1a;white-space:pre;left:769.5px;">0</span>
<span style="position:absolute;top:501.4px;line-height:16px;font-size:12px;letter-spacing:-0.667px;color:#1a1a1a;white-space:pre;left:769.5px;">1</span>
<span style="position:absolute;top:512.4px;line-height:16px;font-size:12px;letter-spacing:-0.667px;color:#1a1a1a;white-space:pre;left:769.5px;">5</span>
<span style="position:absolute;top:523.4px;line-height:16px;font-size:12px;letter-spacing:-0.667px;color:#1a1a1a;white-space:pre;left:769.5px;">0</span>
<span style="position:absolute;top:534.4px;line-height:16px;font-size:12px;letter-spacing:-0.667px;color:#1a1a1a;white-space:pre;left:769.5px;">0</span>
<span style="position:absolute;top:626.8px;line-height:16px;font-size:12px;letter-spacing:-0.667px;color:#1a1a1a;white-space:pre;left:769.5px;">2</span>
<span style="position:absolute;top:637.8px;line-height:16px;font-size:12px;letter-spacing:-0.667px;color:#1a1a1a;white-space:pre;left:769.5px;">0</span>
<span style="position:absolute;top:648.8px;line-height:16px;font-size:12px;letter-spacing:-0.667px;color:#1a1a1a;white-space:pre;left:769.5px;">0</span>
<span style="position:absolute;top:659.8px;line-height:16px;font-size:12px;letter-spacing:-0.667px;color:#1a1a1a;white-space:pre;left:769.5px;">0</span>
<span style="position:absolute;top:752.2px;line-height:16px;font-size:12px;letter-spacing:-0.667px;color:#1a1a1a;white-space:pre;left:769.5px;">2</span>
<span style="position:absolute;top:763.2px;line-height:16px;font-size:12px;letter-spacing:-0.667px;color:#1a1a1a;white-space:pre;left:769.5px;">5</span>
<span style="position:absolute;top:774.2px;line-height:16px;font-size:12px;letter-spacing:-0.667px;color:#1a1a1a;white-space:pre;left:769.5px;">0</span>
<span style="position:absolute;top:785.2px;line-height:16px;font-size:12px;letter-spacing:-0.667px;color:#1a1a1a;white-space:pre;left:769.5px;">0</span>
<span style="position:absolute;top:877.7px;line-height:16px;font-size:12px;letter-spacing:-0.667px;color:#1a1a1a;white-space:pre;left:769.5px;">3</span>
<span style="position:absolute;top:888.7px;line-height:16px;font-size:12px;letter-spacing:-0.667px;color:#1a1a1a;white-space:pre;left:769.5px;">0</span>
<span style="position:absolute;top:899.7px;line-height:16px;font-size:12px;letter-spacing:-0.667px;color:#1a1a1a;white-space:pre;left:769.5px;">0</span>
<span style="position:absolute;top:910.7px;line-height:16px;font-size:12px;letter-spacing:-0.667px;color:#1a1a1a;white-space:pre;left:769.5px;">0</span>
<div style="position:absolute;left:786.5px;top:126.0px;width:1652.0px;height:1.0px;background:#d4d4d4;"></div>
<svg style="position:absolute;left:769.0px;top:110.5px;" width="15" height="14" viewBox="0 0 15 14"><rect x=".7" y=".7" width="13.600" height="12.600" fill="#f4f4f4" stroke="#000" stroke-width="1.400"/><path d="M4.500 3.200v7.600l6.500-3.800z"/></svg>
<svg style="position:absolute;left:1848.0px;top:121.0px;" width="9" height="5" viewBox="0 0 9 5"><path d="M0 0h9l-4.500 5z"/></svg>
<svg style="position:absolute;left:780.0px;top:324.0px;" width="5" height="9" viewBox="0 0 5 9"><path d="M0 0v9l5-4.500z"/></svg>
<svg style="position:absolute;left:2438.3px;top:111.0px;" width="15" height="15" viewBox="0 0 15 15"><circle cx="5.500" cy="5.500" r="4" fill="none" stroke="#000" stroke-width="2.200"/><path d="M8.500 8.500l5 5" stroke="#000" stroke-width="2.800"/></svg>
<svg style="position:absolute;left:1291px;top:127px" width="640" height="879"><use href="#rosas" width="640" height="879"/></svg>
<div style="position:absolute;left:1291px;top:127px;width:640px;height:879px;border:1px solid #ffff00;box-sizing:border-box;"></div>
<div style="position:absolute;left:1291px;top:127px;width:640px;height:879px;border:1px dashed #000;box-sizing:border-box;"></div>
<svg style="position:absolute;left:2213.0px;top:318.0px;" width="20" height="20" viewBox="0 0 20 20"><circle cx="10" cy="10" r="7.800" fill="none" stroke="#333" stroke-width="1.200" stroke-dasharray="3.500 2.600"/></svg>
<div style="position:absolute;left:2439.5px;top:128.0px;width:8.3px;height:877.0px;background:#707070;border-radius:4.500px;"></div>
<div style="position:absolute;left:787.0px;top:1010.7px;width:1647.0px;height:8.3px;background:#707070;border-radius:4.500px;"></div>
<svg style="position:absolute;left:769.0px;top:1006.5px;" width="15" height="16" viewBox="0 0 15 16"><rect width="15" height="16" fill="#9a9a9a"/><rect x="2" y="2.500" width="11" height="11" fill="none" stroke="#000" stroke-width="1.200" stroke-dasharray="1.200 1.200"/></svg>
<svg style="position:absolute;left:2435.5px;top:1006.0px;" width="13" height="18" viewBox="0 0 13 18"><path d="M6.500 1L12.500 17 6.500 12 0.500 17z"/></svg>
<span style="position:absolute;top:1033.0px;line-height:16px;font-size:12px;letter-spacing:-0.600px;color:#1a1a1a;white-space:pre;left:783.2px;">2237.0, 805.5</span>
<div style="position:absolute;left:865.5px;top:1024.5px;width:58.5px;height:25.0px;background:#dcdcdc;border:1px solid #cbcbcb;border-radius:5px 5px 0 0;box-sizing:border-box;border-bottom:none;"></div>
<span style="position:absolute;top:1033.5px;line-height:16px;font-size:12px;letter-spacing:-0.673px;color:#1a1a1a;white-space:pre;left:877.5px;">px</span>
<svg style="position:absolute;left:901.0px;top:1036.0px;" width="12" height="12" viewBox="0 0 12 12"><path d="M1 3.500l5 5 5-5" fill="none" stroke="#000" stroke-width="2.300"/></svg>
<div style="position:absolute;left:927.0px;top:1024.5px;width:88.0px;height:25.0px;background:#dcdcdc;border:1px solid #cbcbcb;border-radius:5px 5px 0 0;box-sizing:border-box;border-bottom:none;"></div>
<div style="position:absolute;left:928.0px;top:1025.5px;width:51.0px;height:24.0px;background:#fafafa;border-radius:4px 0 0 0;border-right:1px solid #cbcbcb;"></div>
<span style="position:absolute;top:1033.5px;line-height:16px;font-size:12px;letter-spacing:-0.952px;color:#1a1a1a;white-space:pre;left:938.5px;">25.1</span>
<span style="position:absolute;top:1033.5px;line-height:16px;font-size:12px;letter-spacing:-0.170px;color:#1a1a1a;white-space:pre;left:960.3px;">%</span>
<svg style="position:absolute;left:990.5px;top:1036.0px;" width="12" height="12" viewBox="0 0 12 12"><path d="M1 3.500l5 5 5-5" fill="none" stroke="#000" stroke-width="2.300"/></svg>
<svg style="position:absolute;left:1018.0px;top:1033.0px;" width="15" height="15" viewBox="0 0 15 15"><path d="M9.500 0.500l5 4.300-4 4.700-5-4.300z"/><path d="M5 6l5 4.300-2.500 3-5-4.300z" fill="#888"/><path d="M0 14.300h3.500M5.500 14.300h9" stroke="#000" stroke-width="1.200"/></svg>
<span style="position:absolute;top:1033.0px;line-height:16px;font-size:12px;letter-spacing:-0.083px;color:#1a1a1a;white-space:pre;left:1038.2px;">Click to erase (Ctrl to pick a background color)</span>
<svg style="position:absolute;left:2425.0px;top:1029.5px;" width="22" height="20" viewBox="0 0 22 20"><rect x=".5" y=".5" width="20" height="20" fill="#eee" stroke="#d2d2d2"/><path d="M4 6h6l-3 4zM11 11h6l-3 4z" fill="#d4d4d4"/></svg>
<div style="position:absolute;left:768.0px;top:1048.5px;width:1680.0px;height:2.0px;background:#1a1a1a;"></div>
<div style="position:absolute;left:2453.0px;top:56.0px;width:1.0px;height:842.0px;background:#d8d8d8;"></div>
<div style="position:absolute;left:2459.5px;top:56.0px;width:1.0px;height:842.0px;background:#d8d8d8;"></div>
<svg style="position:absolute;left:2455.0px;top:545.0px;" width="4" height="16" viewBox="0 0 4 16"><circle cx="2" cy="3" r="1.100" fill="#555"/><circle cx="2" cy="8" r="1.100" fill="#555"/><circle cx="2" cy="13" r="1.100" fill="#555"/></svg>
<div style="position:absolute;left:2466.4px;top:56.0px;width:32.5px;height:32.5px;background:#ececec;border:1px solid #dcdcdc;border-bottom:none;box-sizing:border-box;"></div>
<div style="position:absolute;left:2504.3px;top:56.0px;width:32.5px;height:32.5px;background:#ececec;border:1px solid #dcdcdc;border-bottom:none;box-sizing:border-box;"></div>
<div style="position:absolute;left:2542.3px;top:56.0px;width:32.5px;height:29.0px;background:#f8f8f8;"></div>
<div style="position:absolute;left:2542.3px;top:85.0px;width:32.5px;height:3.0px;background:#c4c4c4;"></div>
<div style="position:absolute;left:2580.2px;top:56.0px;width:32.5px;height:32.5px;background:#ececec;border:1px solid #dcdcdc;border-bottom:none;box-sizing:border-box;"></div>
<div style="position:absolute;left:2618.2px;top:56.0px;width:32.5px;height:32.5px;background:#ececec;border:1px solid #dcdcdc;border-bottom:none;box-sizing:border-box;"></div>
<div style="position:absolute;left:2656.2px;top:56.0px;width:32.5px;height:32.5px;background:#ececec;border:1px solid #dcdcdc;border-bottom:none;box-sizing:border-box;"></div>
<div style="position:absolute;left:2694.1px;top:56.0px;width:32.5px;height:32.5px;background:#ececec;border:1px solid #dcdcdc;border-bottom:none;box-sizing:border-box;"></div>
<div style="position:absolute;left:2732.1px;top:56.0px;width:32.5px;height:32.5px;background:#ececec;border:1px solid #dcdcdc;border-bottom:none;box-sizing:border-box;"></div>
<div style="position:absolute;left:2770.0px;top:56.0px;width:32.5px;height:32.5px;background:#ececec;border:1px solid #dcdcdc;border-bottom:none;box-sizing:border-box;"></div>
<div style="position:absolute;left:2808.0px;top:56.0px;width:32.5px;height:32.5px;background:#ececec;border:1px solid #dcdcdc;border-bottom:none;box-sizing:border-box;"></div>
<div style="position:absolute;left:2845.9px;top:56.0px;width:32.5px;height:32.5px;background:#ececec;border:1px solid #dcdcdc;border-bottom:none;box-sizing:border-box;"></div>
<div style="position:absolute;left:2883.9px;top:56.0px;width:32.5px;height:32.5px;background:#ececec;border:1px solid #dcdcdc;border-bottom:none;box-sizing:border-box;"></div>
<div style="position:absolute;left:2921.8px;top:56.0px;width:32.5px;height:32.5px;background:#ececec;border:1px solid #dcdcdc;border-bottom:none;box-sizing:border-box;"></div>
<svg style="position:absolute;left:2474.4px;top:64.2px;" width="18" height="18" viewBox="0 0 18 18"><path d="M9 1L16.500 17 9 12 1.500 17z"/></svg>
<svg style="position:absolute;left:2512.3px;top:64.2px;" width="18" height="18" viewBox="0 0 18 18"><rect x="1" y="1.500" width="16" height="15" fill="#bdbdbd" stroke="#000" stroke-width="1.200" stroke-dasharray="1.200 1.200"/></svg>
<svg style="position:absolute;left:2588.2px;top:64.2px;" width="18" height="18" viewBox="0 0 18 18"><rect x="1" y="1" width="16" height="16" fill="#fff" stroke="#000" stroke-width="1.600"/><path d="M5 4l8 6-3.500.5 2 4-1.800.9-2-4L5 13.500z"/></svg>
<svg style="position:absolute;left:2626.2px;top:64.2px;" width="18" height="18" viewBox="0 0 18 18"><path d="M17 1L9 10l1.800 1.800z"/><path d="M8 10.500l2 2c-1 2.500-4 4-8 4 2.500-1 3-2 4-4 .5-1 1.200-1.700 2-2z"/></svg>
<svg style="position:absolute;left:2664.2px;top:64.2px;" width="18" height="18" viewBox="0 0 18 18"><defs><linearGradient id="tg"><stop offset="0" stop-color="#eee"/><stop offset="1" stop-color="#777"/></linearGradient></defs><rect x="1" y="1" width="16" height="16" fill="url(#tg)" stroke="#000" stroke-width="1.600"/></svg>
<svg style="position:absolute;left:2702.1px;top:64.2px;" width="18" height="18" viewBox="0 0 18 18"><rect x="1.500" y="4" width="14" height="9.500" fill="#fff" stroke="#000" stroke-width="1.500"/><path d="M4 14l-1.500 3M13 14l1.500 3M3 15.500h12" stroke="#000" stroke-width="1.200"/><path d="M8 10.500l.8-2.500L15 1.500l1.800 1.800-6.300 6.400z"/></svg>
<svg style="position:absolute;left:2740.1px;top:64.2px;" width="18" height="18" viewBox="0 0 18 18"><rect x="1.500" y="1.500" width="15" height="15" fill="none" stroke="#000" stroke-width="2" stroke-dasharray="3 3"/><circle cx="9" cy="9" r="2.800"/></svg>
<svg style="position:absolute;left:2816.0px;top:64.2px;" width="18" height="18" viewBox="0 0 18 18"><path d="M9 5C7 1 2 0 .5 2c-.5 3 1 6 4 7-3 1-3.500 5-1.500 8 3 0 5-3 6-6 1 3 3 6 6 6 2-3 1.500-7-1.500-8 3-1 4.500-4 4-7C16 0 11 1 9 5z"/></svg>
<svg style="position:absolute;left:2853.9px;top:64.2px;" width="18" height="18" viewBox="0 0 18 18"><rect x="3" y="2" width="5" height="15" fill="#c8c8c8"/><rect x="10" y="5" width="4" height="12" fill="#3a3024"/><rect x="11" y="1" width="2" height="5" fill="#b09a6a"/><rect x="6" y="6" width="3" height="11" fill="#ddd"/></svg>
<svg style="position:absolute;left:2891.9px;top:64.2px;" width="18" height="18" viewBox="0 0 18 18"><path d="M1 17L3.500 3l2 1.500L7 1l3 9 2-3 2 6 2-1 1 5z"/></svg>
<svg style="position:absolute;left:2929.8px;top:64.2px;" width="18" height="18" viewBox="0 0 18 18"><path d="M2 7.500C4 3 8 1.500 12 2.500c2.500.7 4 2.300 4.500 4l-1.800.6C14 5.500 12.500 4.700 11 4.500 8 4 5.500 5.500 4 8.500z"/><path d="M9 6.500c1.500-.5 3 .5 3 2.500 0 2.500-1.500 4.500-3 5.500l-1-1c1-1 2-2.500 2-4 0-1-.5-1.300-1-1z"/><circle cx="8.500" cy="14.500" r="1.400"/></svg>
<svg style="position:absolute;left:2553px;top:65px" width="13" height="16"><rect width="13" height="16" fill="#1c1c1c"/><rect x="1.500" y="1.500" width="10" height="13" fill="#2f6e48"/><circle cx="5.500" cy="6" r="2.200" fill="#a3208a"/><circle cx="7.500" cy="9.500" r="2.300" fill="#c9142a"/><circle cx="7.500" cy="4" r="1.600" fill="#d8201c"/></svg>
<span style="position:absolute;top:62.5px;line-height:13px;font-size:9px;letter-spacing:-0.225px;color:#1a1a1a;white-space:pre;font-weight:bold;left:2781.0px;">a</span>
<span style="position:absolute;top:64.5px;line-height:15px;font-size:11px;letter-spacing:-0.302px;color:#1a1a1a;white-space:pre;font-weight:bold;left:2788.5px;">b</span>
<span style="position:absolute;top:72.0px;line-height:13px;font-size:9px;letter-spacing:-0.225px;color:#1a1a1a;white-space:pre;font-weight:bold;left:2781.5px;font-style:italic;">c</span>
<svg style="position:absolute;left:3320.5px;top:67.0px;" width="10" height="10" viewBox="0 0 10 10"><rect x=".5" y=".5" width="9" height="9" fill="#f6f6f6" stroke="#000" stroke-width="1"/><path d="M7 2.300v5.400L2.800 5z"/></svg>
<div style="position:absolute;left:2460.0px;top:89.0px;width:876.0px;height:1.0px;background:#cfcfcf;"></div>
<div style="position:absolute;left:2462.5px;top:92.8px;width:873.0px;height:804.7px;background:#fafafa;"></div>
<div style="position:absolute;left:2462.5px;top:92.8px;width:873.0px;height:50.0px;background:#dddddd;"></div>
<div style="position:absolute;left:3335.5px;top:56.0px;width:1.0px;height:842.0px;background:#d8d8d8;"></div>
<div style="position:absolute;left:3338.0px;top:56.0px;width:1.0px;height:842.0px;background:#d8d8d8;"></div>
<div style="position:absolute;left:3344.0px;top:56.0px;width:1.0px;height:842.0px;background:#d8d8d8;"></div>
<svg style="position:absolute;left:3339.5px;top:545.0px;" width="4" height="16" viewBox="0 0 4 16"><circle cx="2" cy="3" r="1.100" fill="#555"/><circle cx="2" cy="8" r="1.100" fill="#555"/><circle cx="2" cy="13" r="1.100" fill="#555"/></svg>
<span style="position:absolute;top:109.8px;line-height:16px;font-size:12px;letter-spacing:-0.283px;color:#1a1a1a;white-space:pre;left:2515.3px;">Rosas pintadas por Betania.jpg (2550 × 3509)</span>
<svg style="position:absolute;left:2471.500px;top:95.3px;filter:drop-shadow(1px 1.500px 1px rgba(0,0,0,.45));" width="33" height="44"><rect width="33" height="44" fill="#fff"/><use href="#rosas" x="1" y="1" width="31" height="42"/></svg>
<span style="position:absolute;top:159.8px;line-height:16px;font-size:12px;letter-spacing:-0.172px;color:#1a1a1a;white-space:pre;left:2515.3px;">Pintado por mi - Moises canasta2.jpg (2550 × 3509)</span>
<svg style="position:absolute;left:2471.500px;top:145.3px;filter:drop-shadow(1px 1.500px 1px rgba(0,0,0,.45));" width="33" height="44"><rect width="33" height="44" fill="#fff"/><use href="#moises" x="1" y="1" width="31" height="42"/></svg>
<span style="position:absolute;top:209.8px;line-height:16px;font-size:12px;letter-spacing:-0.127px;color:#1a1a1a;white-space:pre;left:2515.3px;">Rey-principe-mendigo-Yon-Fortachon-COLOR-Sin-Letras.png (3654 × 2656)</span>
<svg style="position:absolute;left:2466.5px;top:200.3px;filter:drop-shadow(1px 1.500px 1px rgba(0,0,0,.45));" width="44" height="34" viewBox="0 0 44 34"><rect width="44" height="34" fill="#f3ecd6"/><rect x="1" y="1" width="42" height="10" fill="#f0e3b8"/><ellipse cx="13" cy="18" rx="6" ry="8" fill="#e4c9b4"/><ellipse cx="27" cy="17" rx="7" ry="9" fill="#c9d8e8"/><ellipse cx="35" cy="22" rx="5" ry="7" fill="#e9d7a8"/><rect x="2" y="26" width="40" height="6" fill="#e2d2c0"/><ellipse cx="20" cy="27" rx="6" ry="3" fill="#d9b6b0"/></svg>
<span style="position:absolute;top:259.8px;line-height:16px;font-size:12px;letter-spacing:-0.342px;color:#1a1a1a;white-space:pre;left:2515.3px;">Reloj-CenaB.png (3373 × 3372)</span>
<svg style="position:absolute;left:2467.0px;top:246.3px;filter:drop-shadow(1px 1.500px 1px rgba(0,0,0,.45));" width="43" height="43" viewBox="0 0 43 43"><rect width="43" height="43" fill="url(#ck2)"/><circle cx="21.500" cy="21.500" r="20.500" fill="#f8f8f8" stroke="#b8b0a0" stroke-width="1.500"/><circle cx="21.500" cy="21.500" r="12" fill="none" stroke="#c9c0b0" stroke-width="1"/><circle cx="21.5" cy="5.0" r="1.100" fill="#333"/><circle cx="29.8" cy="7.2" r="1.100" fill="#333"/><circle cx="35.8" cy="13.3" r="1.100" fill="#333"/><circle cx="38.0" cy="21.5" r="1.100" fill="#333"/><circle cx="35.8" cy="29.8" r="1.100" fill="#333"/><circle cx="29.7" cy="35.8" r="1.100" fill="#333"/><circle cx="21.5" cy="38.0" r="1.100" fill="#333"/><circle cx="13.2" cy="35.8" r="1.100" fill="#333"/><circle cx="7.2" cy="29.7" r="1.100" fill="#333"/><circle cx="5.0" cy="21.5" r="1.100" fill="#333"/><circle cx="7.2" cy="13.2" r="1.100" fill="#333"/><circle cx="13.3" cy="7.2" r="1.100" fill="#333"/><circle cx="27" cy="15" r="3" fill="#4a6ac0"/><circle cx="15" cy="24" r="2.500" fill="#e8c040"/><circle cx="27" cy="26" r="3" fill="#e8a0a0"/><path d="M21.500 8v26" stroke="#111" stroke-width="2"/><circle cx="21.500" cy="21.500" r="1.500" fill="#111"/></svg>
<span style="position:absolute;top:309.8px;line-height:16px;font-size:12px;letter-spacing:-0.237px;color:#1a1a1a;white-space:pre;left:2515.3px;">Reloj-AlmuerzoB.png (3373 × 3372)</span>
<svg style="position:absolute;left:2467.0px;top:296.3px;filter:drop-shadow(1px 1.500px 1px rgba(0,0,0,.45));" width="43" height="43" viewBox="0 0 43 43"><rect width="43" height="43" fill="url(#ck2)"/><circle cx="21.500" cy="21.500" r="20.500" fill="#fbfbf8" stroke="#b8b0a0" stroke-width="1.500"/><circle cx="21.500" cy="21.500" r="12" fill="none" stroke="#c9c0b0" stroke-width="1"/><circle cx="21.5" cy="5.0" r="1.100" fill="#333"/><circle cx="29.8" cy="7.2" r="1.100" fill="#333"/><circle cx="35.8" cy="13.3" r="1.100" fill="#333"/><circle cx="38.0" cy="21.5" r="1.100" fill="#333"/><circle cx="35.8" cy="29.8" r="1.100" fill="#333"/><circle cx="29.7" cy="35.8" r="1.100" fill="#333"/><circle cx="21.5" cy="38.0" r="1.100" fill="#333"/><circle cx="13.2" cy="35.8" r="1.100" fill="#333"/><circle cx="7.2" cy="29.7" r="1.100" fill="#333"/><circle cx="5.0" cy="21.5" r="1.100" fill="#333"/><circle cx="7.2" cy="13.2" r="1.100" fill="#333"/><circle cx="13.3" cy="7.2" r="1.100" fill="#333"/><ellipse cx="21.500" cy="13" rx="5" ry="2.500" fill="#e8c030"/><circle cx="27" cy="24" r="3" fill="#e8a0a8"/><path d="M21.500 10v24" stroke="#777" stroke-width="1.800"/></svg>
<span style="position:absolute;top:359.8px;line-height:16px;font-size:12px;letter-spacing:-0.276px;color:#1a1a1a;white-space:pre;left:2515.3px;">Reloj-DesayunoB.png (3625 × 3840)</span>
<svg style="position:absolute;left:2467.0px;top:346.3px;filter:drop-shadow(1px 1.500px 1px rgba(0,0,0,.45));" width="43" height="43" viewBox="0 0 43 43"><rect width="43" height="43" fill="url(#ck2)"/><circle cx="21.500" cy="21.500" r="20.500" fill="#f3e7b2" stroke="#b8b0a0" stroke-width="1.500"/><circle cx="21.500" cy="21.500" r="12" fill="none" stroke="#c9c0b0" stroke-width="1"/><circle cx="21.5" cy="5.0" r="1.100" fill="#333"/><circle cx="29.8" cy="7.2" r="1.100" fill="#333"/><circle cx="35.8" cy="13.3" r="1.100" fill="#333"/><circle cx="38.0" cy="21.5" r="1.100" fill="#333"/><circle cx="35.8" cy="29.8" r="1.100" fill="#333"/><circle cx="29.7" cy="35.8" r="1.100" fill="#333"/><circle cx="21.5" cy="38.0" r="1.100" fill="#333"/><circle cx="13.2" cy="35.8" r="1.100" fill="#333"/><circle cx="7.2" cy="29.7" r="1.100" fill="#333"/><circle cx="5.0" cy="21.5" r="1.100" fill="#333"/><circle cx="7.2" cy="13.2" r="1.100" fill="#333"/><circle cx="13.3" cy="7.2" r="1.100" fill="#333"/><circle cx="15" cy="17" r="3" fill="#e8a0a8"/><circle cx="27" cy="19" r="2.500" fill="#f0c030"/><path d="M21.500 22l-5-5M21.500 22l4 9" stroke="#111" stroke-width="2.400"/></svg>
<span style="position:absolute;top:409.8px;line-height:16px;font-size:12px;letter-spacing:-0.255px;color:#1a1a1a;white-space:pre;left:2515.3px;">Reloj-Desayuno.png (2023 × 2023)</span>
<svg style="position:absolute;left:2467.0px;top:396.3px;filter:drop-shadow(1px 1.500px 1px rgba(0,0,0,.45));" width="43" height="43" viewBox="0 0 43 43"><rect width="43" height="43" fill="url(#ck2)"/><circle cx="21.500" cy="21.500" r="20.500" fill="#f3e7b2" stroke="#b8b0a0" stroke-width="1.500"/><circle cx="21.500" cy="21.500" r="12" fill="none" stroke="#c9c0b0" stroke-width="1"/><circle cx="21.5" cy="5.0" r="1.100" fill="#333"/><circle cx="29.8" cy="7.2" r="1.100" fill="#333"/><circle cx="35.8" cy="13.3" r="1.100" fill="#333"/><circle cx="38.0" cy="21.5" r="1.100" fill="#333"/><circle cx="35.8" cy="29.8" r="1.100" fill="#333"/><circle cx="29.7" cy="35.8" r="1.100" fill="#333"/><circle cx="21.5" cy="38.0" r="1.100" fill="#333"/><circle cx="13.2" cy="35.8" r="1.100" fill="#333"/><circle cx="7.2" cy="29.7" r="1.100" fill="#333"/><circle cx="5.0" cy="21.5" r="1.100" fill="#333"/><circle cx="7.2" cy="13.2" r="1.100" fill="#333"/><circle cx="13.3" cy="7.2" r="1.100" fill="#333"/><circle cx="15" cy="18" r="3.200" fill="#e8a0a8"/><circle cx="28" cy="19" r="2.500" fill="#f0c030"/><path d="M21.500 22v10M21.500 22l-4 6" stroke="#c9b890" stroke-width="1.200"/></svg>
<span style="position:absolute;top:459.8px;line-height:16px;font-size:12px;letter-spacing:-0.066px;color:#1a1a1a;white-space:pre;left:2515.3px;">Rey-principe-mendigo-Yon-Fortachon-COLOR-Sin-Letras2.png</span>
<svg style="position:absolute;left:2471.500px;top:445.3px" width="34" height="44"><use href="#doc" width="34" height="44"/></svg>
<span style="position:absolute;top:509.8px;line-height:16px;font-size:12px;letter-spacing:-0.168px;color:#1a1a1a;white-space:pre;left:2515.3px;">Portada-Pequeños-consejos-gran-salud-001.png (3508 × 2480)</span>
<svg style="position:absolute;left:2466.5px;top:500.3px;filter:drop-shadow(1px 1.500px 1px rgba(0,0,0,.45));" width="44" height="32" viewBox="0 0 44 32"><rect width="44" height="32" fill="#f6e9c4"/><path d="M0 8L12 0h8L0 16zM0 28L30 0h8L6 32H0zM20 32L44 8v10L30 32zM40 32l4-4v4z" fill="#f4c9b8"/><rect x="10" y="10" width="24" height="14" rx="3" fill="#cfe0c4"/><rect x="13" y="13" width="16" height="7" fill="#9db99a"/><rect x="16" y="25" width="14" height="3" fill="#d8c9a8"/></svg>
<span style="position:absolute;top:559.8px;line-height:16px;font-size:12px;letter-spacing:-0.080px;color:#1a1a1a;white-space:pre;left:2515.3px;">Pablo ante Agripa.png</span>
<svg style="position:absolute;left:2471.500px;top:545.3px" width="34" height="44"><use href="#doc" width="34" height="44"/></svg>
<span style="position:absolute;top:609.8px;line-height:16px;font-size:12px;letter-spacing:-0.271px;color:#1a1a1a;white-space:pre;left:2515.3px;">olla 02.jpg (900 × 1600)</span>
<svg style="position:absolute;left:2476.0px;top:596.3px;filter:drop-shadow(1px 1.500px 1px rgba(0,0,0,.45));" width="25" height="42" viewBox="0 0 25 42"><rect width="25" height="42" fill="#b8322c"/><rect width="25" height="14" fill="#d9c9c4"/><ellipse cx="4" cy="24" rx="11" ry="17" fill="#15120f"/><path d="M10 28c3-2 5-6 5-10" stroke="#e8e8e8" stroke-width="1.200" fill="none"/><rect x="14" y="2" width="9" height="12" fill="#e9e4e2"/></svg>
<span style="position:absolute;top:659.8px;line-height:16px;font-size:12px;letter-spacing:-0.271px;color:#1a1a1a;white-space:pre;left:2515.3px;">olla 03.jpg (900 × 1600)</span>
<svg style="position:absolute;left:2476.0px;top:646.3px;filter:drop-shadow(1px 1.500px 1px rgba(0,0,0,.45));" width="25" height="42" viewBox="0 0 25 42"><rect width="25" height="42" fill="#b8322c"/><rect width="25" height="16" fill="#cdb4a8"/><ellipse cx="6" cy="28" rx="11" ry="15" fill="#15120f"/><path d="M12 30c3-1 5-4 5-7" stroke="#e8e8e8" stroke-width="1.200" fill="none"/><rect x="12" y="4" width="11" height="10" fill="#e4d4d0"/></svg>
<span style="position:absolute;top:709.8px;line-height:16px;font-size:12px;letter-spacing:-0.097px;color:#1a1a1a;white-space:pre;left:2515.3px;">Lutero borrador 001.png</span>
<svg style="position:absolute;left:2471.500px;top:695.3px" width="34" height="44"><use href="#doc" width="34" height="44"/></svg>
<span style="position:absolute;top:759.8px;line-height:16px;font-size:12px;letter-spacing:-0.207px;color:#1a1a1a;white-space:pre;left:2515.3px;">Puerta Wittenberg Borrador 005.png (2094 × 3135)</span>
<svg style="position:absolute;left:2474.0px;top:745.3px;filter:drop-shadow(1px 1.500px 1px rgba(0,0,0,.45));" width="30" height="44" viewBox="0 0 30 44"><rect width="30" height="44" fill="#fcfcfc"/><path d="M4 40V16C4 6 26 6 26 16v24" fill="none" stroke="#bdbdbd" stroke-width="1"/><path d="M8 40V18c0-7 14-7 14 0v22M4 22h22M4 30h22M15 8v32" fill="none" stroke="#d4d4d4" stroke-width=".8"/><path d="M15 24l3-1 1 4-2 1 0 12h-2.500l.5-10z" fill="#444"/><rect x="12" y="40" width="10" height="1.500" fill="#666"/></svg>
<span style="position:absolute;top:809.8px;line-height:16px;font-size:12px;letter-spacing:-0.190px;color:#1a1a1a;white-space:pre;left:2515.3px;">Puerta Wittenberg.xcf (3032 × 4293)</span>
<svg style="position:absolute;left:2474.0px;top:795.3px;filter:drop-shadow(1px 1.500px 1px rgba(0,0,0,.45));" width="30" height="44" viewBox="0 0 30 44"><rect width="30" height="44" fill="url(#ck2)"/><rect x="4" y="2" width="23" height="33" fill="#fbfbfb"/><path d="M8 34V14c0-6 15-6 15 0v20M15 6v28" fill="none" stroke="#d8d8d8" stroke-width=".8"/><path d="M11 21l3-2 1 3 3-2-3 5 1 7h-2l-1-5-1.500 5h-2l1.500-7z" fill="#8a2a22"/></svg>
<span style="position:absolute;top:859.8px;line-height:16px;font-size:12px;letter-spacing:-0.182px;color:#1a1a1a;white-space:pre;left:2515.3px;">Untitled.xcf (1920 × 1080)</span>
<svg style="position:absolute;left:2467.0px;top:854.3px;filter:drop-shadow(1px 1.500px 1px rgba(0,0,0,.45));" width="43" height="25" viewBox="0 0 43 25"><rect width="43" height="25" fill="#86bdd6"/><rect width="43" height="25" fill="url(#ck2)" opacity=".08"/></svg>
<div style="position:absolute;left:2448.0px;top:897.5px;width:1579.0px;height:1.5px;background:#222;"></div>
<div style="position:absolute;left:3351.4px;top:56.0px;width:32.5px;height:29.0px;background:#f8f8f8;"></div>
<div style="position:absolute;left:3351.4px;top:85.0px;width:32.5px;height:3.0px;background:#c4c4c4;"></div>
<div style="position:absolute;left:3389.3px;top:56.0px;width:32.5px;height:32.5px;background:#ececec;border:1px solid #dcdcdc;border-bottom:none;box-sizing:border-box;"></div>
<div style="position:absolute;left:3427.3px;top:56.0px;width:32.5px;height:32.5px;background:#ececec;border:1px solid #dcdcdc;border-bottom:none;box-sizing:border-box;"></div>
<svg style="position:absolute;left:3359.0px;top:63.0px;" width="18" height="18" viewBox="0 0 18 18"><path d="M4 1.500h13l-3 3.700H1zM4 7h13l-3 3.700H1zM4 12.500h13l-3 3.700H1z"/></svg>
<svg style="position:absolute;left:3397.0px;top:63.0px;" width="18" height="18" viewBox="0 0 18 18"><rect x="1.500" y="2" width="15" height="14" fill="#fff" stroke="#000" stroke-width="1.400"/><path d="M5.500 4.500v9M9 4.500v9M12.500 4.500v9" stroke="#000" stroke-width="1.800"/></svg>
<svg style="position:absolute;left:3435.0px;top:63.0px;" width="18" height="18" viewBox="0 0 18 18"><path d="M1.500 14.500c1.500-7 13.500-7 15 0" fill="none" stroke="#000" stroke-width="2"/><path d="M2 5l14 3.500M16 5L2 8.500" stroke="#000" stroke-width="1.600"/><rect x="0.500" y="3.500" width="3" height="3"/><rect x="14.500" y="3.500" width="3" height="3"/></svg>
<svg style="position:absolute;left:4008.5px;top:67.0px;" width="10" height="10" viewBox="0 0 10 10"><rect x=".5" y=".5" width="9" height="9" fill="#f6f6f6" stroke="#000" stroke-width="1"/><path d="M7 2.300v5.400L2.800 5z"/></svg>
<div style="position:absolute;left:3344.0px;top:89.0px;width:683.0px;height:1.0px;background:#cfcfcf;"></div>
<div style="position:absolute;left:3347.4px;top:92.2px;width:635.2px;height:25.0px;background:#dcdcdc;border:1px solid #cbcbcb;border-radius:4px;box-sizing:border-box;"></div>
<span style="position:absolute;top:96.5px;line-height:16px;font-size:12px;letter-spacing:0.161px;color:#111;white-space:pre;left:3352.0px;">Mode</span>
<span style="position:absolute;top:96.5px;line-height:16px;font-size:12px;letter-spacing:-0.074px;color:#111;white-space:pre;left:3919.7px;">Normal</span>
<svg style="position:absolute;left:3966.5px;top:99.5px;" width="12" height="12" viewBox="0 0 12 12"><path d="M1 3.500l5 5 5-5" fill="none" stroke="#000" stroke-width="2.300"/></svg>
<div style="position:absolute;left:3986.5px;top:92.2px;width:36.3px;height:25.0px;background:#dcdcdc;border:1px solid #cbcbcb;border-radius:4px;box-sizing:border-box;"></div>
<svg style="position:absolute;left:3989.5px;top:97.5px;" width="14" height="15" viewBox="0 0 14 15"><path d="M2.200 7.500A5.800 5.800 0 1 1 8 13.300" fill="none" stroke="#000" stroke-width="2"/><path d="M-0.300 5.300l5.400 0.400-3 4.300z"/><circle cx="4" cy="12.500" r="2.200"/></svg>
<svg style="position:absolute;left:4006.5px;top:99.5px;" width="12" height="12" viewBox="0 0 12 12"><path d="M1 3.500l5 5 5-5" fill="none" stroke="#000" stroke-width="2.300"/></svg>
<div style="position:absolute;left:3347.4px;top:120.5px;width:675.4px;height:25.0px;background:#dcdcdc;border:1px solid #cbcbcb;border-radius:4px;box-sizing:border-box;"></div>
<div style="position:absolute;left:3981.0px;top:121.5px;width:40.8px;height:23.0px;background:#e9e9e9;border-radius:0 3px 3px 0;"></div>
<div style="position:absolute;left:3981.0px;top:121.5px;width:1.0px;height:23.0px;background:#cbcbcb;"></div>
<div style="position:absolute;left:4002.0px;top:121.5px;width:1.0px;height:23.0px;background:#cbcbcb;"></div>
<span style="position:absolute;top:124.5px;line-height:16px;font-size:12px;letter-spacing:0.053px;color:#1a1a1a;white-space:pre;left:3355.0px;">Opacity</span>
<span style="position:absolute;top:125.0px;line-height:16px;font-size:12px;letter-spacing:-0.907px;color:#1a1a1a;white-space:pre;left:3947.1px;">100.0</span>
<svg style="position:absolute;left:3984.5px;top:126.0px;" width="14" height="14" viewBox="0 0 14 14"><path d="M0.500 7h13" stroke="#000" stroke-width="2.500"/></svg>
<svg style="position:absolute;left:4005.3px;top:126.0px;" width="14" height="14" viewBox="0 0 14 14"><path d="M0.500 7h13M7 0.500v13" stroke="#b9b9b9" stroke-width="2.500"/></svg>
<div style="position:absolute;left:3347.4px;top:149.7px;width:675.4px;height:36.5px;background:#ececec;border:1px solid #cfcfcf;box-sizing:border-box;"></div>
<div style="position:absolute;left:3377.5px;top:150.0px;width:1.0px;height:36.0px;background:#cfcfcf;"></div>
<div style="position:absolute;left:3408.0px;top:150.0px;width:1.0px;height:36.0px;background:#cfcfcf;"></div>
<div style="position:absolute;left:3438.0px;top:150.0px;width:1.0px;height:36.0px;background:#cfcfcf;"></div>
<svg style="position:absolute;left:3355.2px;top:162.5px;" width="15.5" height="11.2" viewBox="0 0 18 13"><path d="M1 6.500C3.500 2.500 6 1.200 9 1.200s5.500 1.300 8 5.300c-2.500 4-5 5.300-8 5.300S3.500 10.500 1 6.500z" fill="none" stroke="#000" stroke-width="1.600"/><circle cx="9" cy="6" r="2.800"/></svg>
<svg style="position:absolute;left:3386.0px;top:159.5px;" width="14" height="15" viewBox="0 0 14 15"><rect x="1" y="7" width="12" height="8" rx="1"/><path d="M3.500 7V4.500a3.500 3.500 0 0 1 7 0V7" fill="none" stroke="#000" stroke-width="1.800"/></svg>
<span style="position:absolute;top:158.5px;line-height:18px;font-size:14px;letter-spacing:-0.210px;color:#1a1a1a;white-space:pre;font-weight:bold;left:3416.0px;font-style:italic;">f</span>
<span style="position:absolute;top:163.0px;line-height:15px;font-size:11px;letter-spacing:-0.275px;color:#1a1a1a;white-space:pre;font-weight:bold;left:3422.0px;">x</span>
<svg style="position:absolute;left:3996.0px;top:160.0px;" width="15" height="15" viewBox="0 0 15 15"><circle cx="6.500" cy="6.500" r="5" fill="none" stroke="#000" stroke-width="1.800"/><path d="M10 10l4.500 4.500" stroke="#000" stroke-width="2.200"/></svg>
<div style="position:absolute;left:3348.0px;top:187.3px;width:674.5px;height:69.5px;background:#e0e0e0;"></div>
<div style="position:absolute;left:3348.0px;top:256.8px;width:674.5px;height:640.7px;background:#fafafa;"></div>
<svg style="position:absolute;left:3355.2px;top:216.6px;" width="15.5" height="11.2" viewBox="0 0 18 13"><path d="M1 6.500C3.500 2.500 6 1.200 9 1.200s5.500 1.300 8 5.300c-2.500 4-5 5.300-8 5.300S3.500 10.500 1 6.500z" fill="none" stroke="#000" stroke-width="1.600"/><circle cx="9" cy="6" r="2.800"/></svg>
<svg style="position:absolute;left:3458px;top:188.500px" width="50" height="67"><rect width="50" height="67" fill="#fff"/><use href="#rosas" x="2" y="2" width="46" height="63"/></svg>
<span style="position:absolute;top:214.0px;line-height:16px;font-size:12px;letter-spacing:-0.475px;color:#1a1a1a;white-space:pre;font-weight:bold;left:3511.4px;">Rosas pintadas por Betania.jpg</span>
<div style="position:absolute;left:4023.0px;top:56.0px;width:1.0px;height:842.0px;background:#d8d8d8;"></div>
<div style="position:absolute;left:4024.0px;top:31.0px;width:3.0px;height:867.0px;background:#efefef;"></div>
<svg style="position:absolute;left:0.0px;top:1058.5px;" width="767.5" height="307.5" viewBox="0 1058.500 767.500 307.500"><defs><filter id="wb" x="-10%" y="-10%" width="120%" height="120%"><feGaussianBlur stdDeviation="7"/></filter><filter id="wb2"><feGaussianBlur stdDeviation="2.500"/></filter><filter id="wb3"><feGaussianBlur stdDeviation="1.100"/></filter><filter id="wtex" x="0" y="0" width="100%" height="100%"><feTurbulence type="fractalNoise" baseFrequency="0.03 0.12" numOctaves="3" seed="8" result="n"/><feColorMatrix in="n" type="matrix" values="0 0 0 0 0  0 0 0 0 0  0 0 0 0 0  0.900 0.900 0 0 -0.650"/></filter><linearGradient id="wg" x1="0" y1="0" x2="0" y2="1"><stop offset="0" stop-color="#7a6a26"/><stop offset=".12" stop-color="#85792c"/><stop offset=".35" stop-color="#8a8a32"/><stop offset=".7" stop-color="#8f8e30"/><stop offset="1" stop-color="#9a962f"/></linearGradient></defs><rect x="0" y="1058" width="768" height="308" fill="url(#wg)"/><g filter="url(#wb)"><ellipse cx="230" cy="1135" rx="210" ry="30" fill="#9c9836"/><ellipse cx="120" cy="1310" rx="200" ry="45" fill="#9d9a34"/><ellipse cx="360" cy="1330" rx="200" ry="30" fill="#9a9a33"/><ellipse cx="650" cy="1090" rx="140" ry="30" fill="#8f7d28"/><ellipse cx="560" cy="1150" rx="150" ry="28" fill="#68803a"/><ellipse cx="480" cy="1138" rx="60" ry="14" fill="#8a983c"/><ellipse cx="600" cy="1185" rx="140" ry="22" fill="#5f7530"/><ellipse cx="100" cy="1072" rx="160" ry="18" fill="#6e5f22"/><ellipse cx="30" cy="1135" rx="55" ry="38" fill="#3a3010"/><ellipse cx="40" cy="1105" rx="40" ry="18" fill="#575a20"/><ellipse cx="290" cy="1080" rx="75" ry="25" fill="#5d5a20"/><ellipse cx="360" cy="1090" rx="50" ry="35" fill="#666a26"/><ellipse cx="505" cy="1085" rx="65" ry="30" fill="#666f28"/><ellipse cx="410" cy="1110" rx="40" ry="30" fill="#70732a"/><path d="M0 1195 C80 1188 160 1196 260 1215 C330 1228 380 1235 420 1240 L640 1225 L700 1300 L640 1335 C520 1330 440 1310 380 1295 C300 1275 200 1262 120 1258 L0 1250Z" fill="#3a2a10"/><path d="M390 1222 L700 1200 L680 1335 L430 1330 Z" fill="#4a4019"/><ellipse cx="560" cy="1285" rx="110" ry="35" fill="#3f3214"/><ellipse cx="90" cy="1222" rx="110" ry="20" fill="#241808"/><path d="M380 1358 C480 1350 580 1345 660 1338 L660 1366 L300 1366Z" fill="#2a200c"/></g><rect x="0" y="1058" width="768" height="308" fill="#2a2208" filter="url(#wtex)" opacity=".55"/><g filter="url(#wb3)"><ellipse cx="261" cy="1064" rx="5.0" ry="2.4" fill="#3f4216"/><ellipse cx="237" cy="1080" rx="4.4" ry="4.5" fill="#3f4216"/><ellipse cx="259" cy="1079" rx="4.4" ry="2.4" fill="#3f4216"/><ellipse cx="264" cy="1094" rx="3.1" ry="3.6" fill="#55591f"/><ellipse cx="323" cy="1067" rx="4.5" ry="3.6" fill="#55591f"/><ellipse cx="245" cy="1082" rx="6.4" ry="3.3" fill="#4a4a1a"/><ellipse cx="262" cy="1070" rx="7.7" ry="4.0" fill="#6a7028"/><ellipse cx="327" cy="1060" rx="4.5" ry="3.8" fill="#55591f"/><ellipse cx="328" cy="1078" rx="5.1" ry="3.5" fill="#353511"/><ellipse cx="285" cy="1068" rx="4.3" ry="4.0" fill="#3f4216"/><ellipse cx="240" cy="1083" rx="4.4" ry="3.3" fill="#353511"/><ellipse cx="312" cy="1065" rx="6.4" ry="2.2" fill="#4a4a1a"/><ellipse cx="305" cy="1076" rx="3.9" ry="3.1" fill="#6a7028"/><ellipse cx="270" cy="1080" rx="7.5" ry="2.3" fill="#3f4216"/><ellipse cx="313" cy="1070" rx="5.9" ry="4.2" fill="#3f4216"/><ellipse cx="271" cy="1066" rx="5.3" ry="2.1" fill="#3f4216"/><ellipse cx="334" cy="1094" rx="6.7" ry="4.4" fill="#3f4216"/><ellipse cx="271" cy="1072" rx="3.8" ry="3.6" fill="#6a7028"/><ellipse cx="310" cy="1063" rx="6.1" ry="4.2" fill="#55591f"/><ellipse cx="250" cy="1074" rx="7.8" ry="2.8" fill="#3f4216"/><ellipse cx="275" cy="1076" rx="4.8" ry="4.0" fill="#55591f"/><ellipse cx="298" cy="1076" rx="4.0" ry="4.3" fill="#3f4216"/><ellipse cx="242" cy="1062" rx="3.8" ry="3.7" fill="#4a4a1a"/><ellipse cx="302" cy="1080" rx="5.9" ry="2.8" fill="#3f4216"/><ellipse cx="248" cy="1079" rx="6.9" ry="3.0" fill="#4a4a1a"/><ellipse cx="288" cy="1069" rx="5.1" ry="2.1" fill="#353511"/><ellipse cx="348" cy="1093" rx="5.1" ry="2.5" fill="#4a4a1a"/><ellipse cx="316" cy="1072" rx="4.2" ry="2.5" fill="#4a4a1a"/><ellipse cx="346" cy="1073" rx="4.6" ry="4.2" fill="#55591f"/><ellipse cx="357" cy="1111" rx="5.0" ry="4.3" fill="#3f4216"/><ellipse cx="352" cy="1064" rx="4.1" ry="4.2" fill="#4a4a1a"/><ellipse cx="340" cy="1093" rx="7.0" ry="3.6" fill="#353511"/><ellipse cx="354" cy="1093" rx="6.4" ry="2.7" fill="#353511"/><ellipse cx="387" cy="1063" rx="7.9" ry="4.4" fill="#4a4a1a"/><ellipse cx="317" cy="1106" rx="3.6" ry="4.4" fill="#3f4216"/><ellipse cx="380" cy="1095" rx="5.3" ry="3.2" fill="#353511"/><ellipse cx="384" cy="1070" rx="3.0" ry="4.3" fill="#3f4216"/><ellipse cx="360" cy="1072" rx="5.0" ry="3.9" fill="#353511"/><ellipse cx="381" cy="1088" rx="7.4" ry="2.5" fill="#6a7028"/><ellipse cx="339" cy="1105" rx="6.9" ry="3.2" fill="#6a7028"/><ellipse cx="347" cy="1063" rx="6.5" ry="2.3" fill="#6a7028"/><ellipse cx="380" cy="1091" rx="3.7" ry="2.9" fill="#6a7028"/><ellipse cx="383" cy="1074" rx="4.7" ry="2.2" fill="#6a7028"/><ellipse cx="348" cy="1070" rx="7.9" ry="3.0" fill="#353511"/><ellipse cx="379" cy="1080" rx="3.4" ry="4.3" fill="#55591f"/><ellipse cx="353" cy="1082" rx="7.3" ry="3.9" fill="#3f4216"/><ellipse cx="362" cy="1108" rx="6.2" ry="4.3" fill="#353511"/><ellipse cx="346" cy="1101" rx="3.8" ry="4.2" fill="#4a4a1a"/><ellipse cx="528" cy="1074" rx="7.3" ry="2.6" fill="#3f4216"/><ellipse cx="528" cy="1058" rx="4.6" ry="3.4" fill="#353511"/><ellipse cx="536" cy="1087" rx="5.6" ry="3.3" fill="#353511"/><ellipse cx="543" cy="1075" rx="6.8" ry="4.5" fill="#3f4216"/><ellipse cx="524" cy="1087" rx="4.6" ry="4.3" fill="#353511"/><ellipse cx="536" cy="1085" rx="7.7" ry="3.3" fill="#353511"/><ellipse cx="517" cy="1079" rx="3.7" ry="3.9" fill="#55591f"/><ellipse cx="558" cy="1074" rx="5.2" ry="3.5" fill="#6a7028"/><ellipse cx="470" cy="1101" rx="4.9" ry="3.4" fill="#55591f"/><ellipse cx="524" cy="1100" rx="3.4" ry="3.6" fill="#4a4a1a"/><ellipse cx="486" cy="1076" rx="3.9" ry="4.2" fill="#6a7028"/><ellipse cx="452" cy="1104" rx="7.1" ry="4.0" fill="#3f4216"/><ellipse cx="467" cy="1086" rx="5.5" ry="3.4" fill="#3f4216"/><ellipse cx="534" cy="1104" rx="3.6" ry="3.6" fill="#4a4a1a"/><ellipse cx="518" cy="1098" rx="4.5" ry="4.3" fill="#353511"/><ellipse cx="547" cy="1069" rx="5.4" ry="2.6" fill="#55591f"/><ellipse cx="475" cy="1074" rx="6.1" ry="4.5" fill="#353511"/><ellipse cx="506" cy="1105" rx="4.6" ry="3.1" fill="#6a7028"/><ellipse cx="451" cy="1067" rx="5.7" ry="3.7" fill="#6a7028"/><ellipse cx="541" cy="1077" rx="4.9" ry="2.1" fill="#6a7028"/><ellipse cx="457" cy="1105" rx="7.9" ry="4.3" fill="#6a7028"/><ellipse cx="538" cy="1102" rx="6.8" ry="3.2" fill="#353511"/><ellipse cx="548" cy="1095" rx="3.7" ry="2.6" fill="#55591f"/><ellipse cx="465" cy="1060" rx="5.0" ry="3.5" fill="#6a7028"/><ellipse cx="510" cy="1104" rx="4.3" ry="3.3" fill="#4a4a1a"/><ellipse cx="533" cy="1068" rx="7.7" ry="2.2" fill="#55591f"/><ellipse cx="457" cy="1106" rx="4.4" ry="4.2" fill="#4a4a1a"/><ellipse cx="530" cy="1089" rx="7.8" ry="4.2" fill="#3f4216"/><ellipse cx="512" cy="1091" rx="6.6" ry="3.4" fill="#6a7028"/><ellipse cx="495" cy="1068" rx="4.5" ry="3.3" fill="#353511"/><ellipse cx="468" cy="1100" rx="4.3" ry="3.0" fill="#55591f"/><ellipse cx="545" cy="1074" rx="4.9" ry="3.1" fill="#3f4216"/><ellipse cx="481" cy="1090" rx="4.5" ry="4.0" fill="#3f4216"/><ellipse cx="467" cy="1099" rx="7.1" ry="2.6" fill="#6a7028"/><ellipse cx="391" cy="1120" rx="5.7" ry="4.2" fill="#353511"/><ellipse cx="450" cy="1112" rx="7.6" ry="4.3" fill="#353511"/><ellipse cx="410" cy="1093" rx="5.7" ry="2.5" fill="#353511"/><ellipse cx="427" cy="1120" rx="4.5" ry="3.6" fill="#353511"/><ellipse cx="426" cy="1088" rx="6.2" ry="2.6" fill="#6a7028"/><ellipse cx="408" cy="1119" rx="6.1" ry="2.8" fill="#3f4216"/><ellipse cx="443" cy="1119" rx="7.4" ry="3.6" fill="#3f4216"/><ellipse cx="426" cy="1106" rx="7.9" ry="2.9" fill="#3f4216"/><ellipse cx="401" cy="1089" rx="5.6" ry="4.1" fill="#4a4a1a"/><ellipse cx="392" cy="1111" rx="4.7" ry="3.5" fill="#4a4a1a"/></g><g filter="url(#wb3)"><path d="M289 1062 L286 1120 L280 1160" fill="none" stroke="#3a2a12" stroke-width="3.500"/><path d="M284 1135 C300 1120 320 1112 345 1108" fill="none" stroke="#3a2a12" stroke-width="2"/><path d="M275 1085 L282 1125" fill="none" stroke="#3a2a12" stroke-width="2"/><path d="M351 1075 L349 1150" fill="none" stroke="#4a3a1a" stroke-width="3"/><path d="M497 1062 L500 1175" fill="none" stroke="#3a2a12" stroke-width="3.500"/><path d="M518 1062 L506 1160" fill="none" stroke="#3a2a12" stroke-width="2.500"/><path d="M182 1208 C184 1196 190 1192 200 1194 C215 1186 250 1186 260 1194 C266 1204 264 1222 262 1238 L254 1238 L250 1222 L236 1222 L232 1232 L222 1232 L214 1226 L210 1214 C198 1214 186 1214 182 1208Z" fill="#20140a"/><rect x="538" y="1249" width="90" height="32" rx="3" fill="#2c2412"/><rect x="330" y="1303" width="34" height="14" rx="2" fill="#4a4020"/></g><g filter="url(#wb2)"><path d="M768 1141 C740 1148 715 1165 700 1190 C685 1215 676 1250 668 1290 C664 1315 655 1335 645 1345 L560 1355 L480 1362 L480 1366 L768 1366Z" fill="#0c0806"/><path d="M668 1300 L760 1288 M662 1312 L755 1300 M658 1324 L750 1313" stroke="#b8a8a0" stroke-width="2" opacity=".55"/><path d="M690 1320 C720 1305 750 1305 768 1310 L768 1366 L660 1366Z" fill="#2a100c" opacity=".9"/><rect x="748" y="1220" width="20" height="70" rx="6" fill="#2a1a12"/></g></svg>
<div style="position:absolute;left:0.0px;top:1364.5px;width:767.5px;height:1.5px;background:#3a3a30;"></div></body></html>
